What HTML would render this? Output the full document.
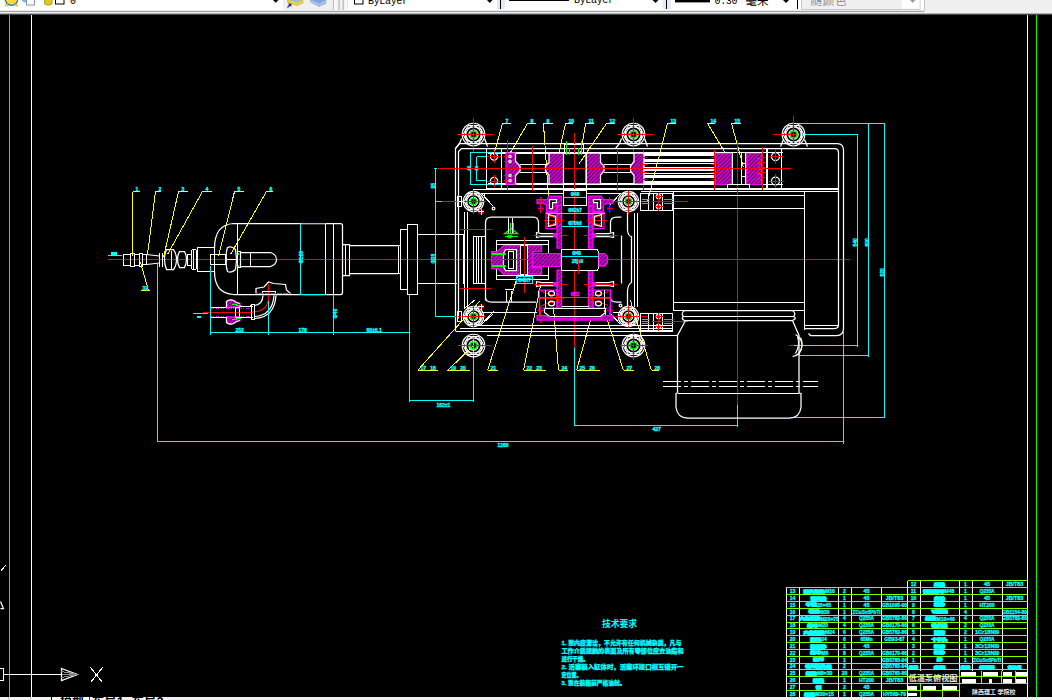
<!DOCTYPE html>
<html lang="zh"><head><meta charset="utf-8"><title>AutoCAD</title>
<style>
html,body{margin:0;padding:0;background:#000;overflow:hidden}
body{width:1052px;height:700px;position:relative;font-family:"Liberation Sans","Noto Sans CJK SC",sans-serif}
#tb{position:absolute;left:0;top:0;width:1052px;height:15px;background:#fff;overflow:hidden}
#bb{position:absolute;left:0;top:697px;width:1052px;height:3px;background:#f0f0f0;overflow:hidden}
svg{position:absolute;left:0;top:0}
#cad line,#cad rect{shape-rendering:crispEdges}
#cad path,#cad circle,#cad ellipse,#cad polyline,#cad polygon{stroke-width:1.25}
#cad g.thin *{stroke-width:1.15}
#cad text{font-weight:bold;font-family:"Liberation Sans","Noto Sans CJK SC",sans-serif}
.hat{fill:url(#hm)}
</style></head><body>
<svg id="cad" width="1052" height="700" viewBox="0 0 1052 700" fill="none" stroke-width="1">
<defs>
<pattern id="hm" width="4" height="4" patternUnits="userSpaceOnUse"><rect width="4" height="4" fill="#000"/><path d="M-1,1 L1,-1 M0,4 L4,0 M3,5 L5,3" stroke="#f0f" style="stroke-width:1.8"/></pattern>
</defs>
<g transform="translate(0.5,0.5)">
<line x1="9" y1="10" x2="9" y2="699" stroke="#0f0"/>
<line x1="31" y1="10" x2="31" y2="699" stroke="#fff"/>
<line x1="1027" y1="10" x2="1027" y2="699" stroke="#fff"/>
<line x1="1036" y1="10" x2="1036" y2="699" stroke="#0f0"/>
<rect x="-1" y="668" width="4" height="12" stroke="#fff" fill="none"/>
<line x1="3" y1="674" x2="61" y2="674" stroke="#fff"/>
<polygon points="61,668 77,674 61,680" stroke="#fff" fill="none"/>
<line x1="61" y1="671" x2="77" y2="674" stroke="#888"/>
<line x1="61" y1="677" x2="77" y2="674" stroke="#888"/>
<line x1="61" y1="674" x2="77" y2="674" stroke="#888"/>
<line x1="90" y1="667" x2="102" y2="682" stroke="#fff"/>
<line x1="102" y1="667" x2="90" y2="682" stroke="#fff"/>
<line x1="0" y1="571" x2="5" y2="565" stroke="#fff"/>
<polyline points="0,601 3,608 0,608" stroke="#fff" fill="none"/>
<line x1="107" y1="259" x2="848" y2="259" stroke="#f00"/>
<rect x="123" y="253.5" width="7" height="11.0" stroke="#fff" fill="none"/>
<rect x="130" y="252.5" width="4" height="13.0" stroke="#fff" fill="none"/>
<rect x="134" y="253.5" width="5" height="11.0" stroke="#fff" fill="none"/>
<rect x="139" y="252.5" width="3" height="13.0" stroke="#fff" fill="none"/>
<rect x="142" y="254" width="4" height="10" stroke="#fff" fill="none"/>
<polyline points="146,254 159,255.5" stroke="#fff" fill="none"/>
<polyline points="146,264 159,262.5" stroke="#fff" fill="none"/>
<line x1="159" y1="252" x2="159" y2="266" stroke="#fff"/>
<line x1="162" y1="252" x2="162" y2="266" stroke="#fff"/>
<path d="M166,249 L173,249 Q176,253 176,259 Q176,265 173,269 L166,269 Q164,264 164,259 Q164,254 166,249 Z" stroke="#fff" fill="none"/>
<line x1="171" y1="250" x2="171" y2="268" stroke="#fff"/>
<path d="M179,251 L184,251 Q186,255 186,259 Q186,263 184,267 L179,267 Q177,263 177,259 Q177,255 179,251 Z" stroke="#fff" fill="none"/>
<rect x="187" y="253.5" width="4" height="11.0" stroke="#fff" fill="none"/>
<rect x="191" y="249" width="5" height="20" stroke="#fff" fill="none" rx="2"/>
<line x1="193" y1="249" x2="193" y2="269" stroke="#fff"/>
<rect x="197" y="247" width="17" height="24" stroke="#fff" fill="none"/>
<line x1="107" y1="255" x2="121" y2="255" stroke="#0ff"/>
<rect x="110.5" y="251.5" width="6" height="3" fill="#0ff"/>
<path d="M214,248 Q214,224 233,223 L340,223 Q342,223 342,225 L342,292 Q342,294 340,294 L233,294 Q214,293 214,271" stroke="#fff" fill="none"/>
<line x1="237" y1="223" x2="237" y2="294" stroke="#fff"/>
<line x1="300" y1="223" x2="300" y2="294" stroke="#0ff"/>
<line x1="325" y1="223" x2="325" y2="294" stroke="#fff"/>
<line x1="300" y1="223" x2="325" y2="223" stroke="#0ff"/>
<line x1="300" y1="294" x2="325" y2="294" stroke="#0ff"/>
<line x1="333" y1="223" x2="333" y2="294" stroke="#fff"/>
<polyline points="342,244 349,244 349,245 398,245" stroke="#fff" fill="none"/>
<polyline points="342,275 349,275 349,273 398,273" stroke="#fff" fill="none"/>
<line x1="345" y1="244" x2="345" y2="275" stroke="#fff"/>
<line x1="349" y1="245" x2="349" y2="273" stroke="#fff"/>
<line x1="398" y1="245" x2="398" y2="273" stroke="#fff"/>
<rect x="400" y="229" width="7" height="60" stroke="#fff" fill="none"/>
<rect x="407" y="224" width="10" height="70" stroke="#fff" fill="none"/>
<line x1="398" y1="245" x2="400" y2="245" stroke="#fff"/>
<line x1="398" y1="273" x2="400" y2="273" stroke="#fff"/>
<line x1="417" y1="234" x2="463" y2="234" stroke="#fff"/>
<line x1="417" y1="283" x2="456" y2="283" stroke="#fff"/>
<rect x="210" y="254" width="15" height="10" stroke="#fff" fill="none"/>
<path d="M227,247 Q231,245 235,249 L236,258 L236,260 L235,269 Q231,273 227,271 Q225,265 226,259 Q225,253 227,247 Z" stroke="#fff" fill="none"/>
<line x1="225" y1="259" x2="237" y2="259" stroke="#fff"/>
<rect x="237" y="251" width="3" height="16" stroke="#fff" fill="none"/>
<path d="M240,252 L270,252 Q276,254 276,259 Q276,264 270,266 L240,266 Z" stroke="#fff" fill="none"/>
<line x1="250" y1="252" x2="250" y2="266" stroke="#fff"/>
<line x1="238" y1="252" x2="238" y2="254" stroke="#0f0"/>
<line x1="238" y1="264" x2="238" y2="266" stroke="#0f0"/>
<line x1="202" y1="311.5" x2="252" y2="311.5" stroke="#f00"/>
<path d="M252,311.5 Q267,311 268,298 L268,284" stroke="#f00" fill="none"/>
<rect x="210" y="306.5" width="25" height="10" stroke="#fff" fill="none"/>
<line x1="210" y1="307.5" x2="252" y2="307.5" stroke="#f0f" stroke-dasharray="1 1.5"/>
<line x1="210" y1="315.5" x2="252" y2="315.5" stroke="#f0f" stroke-dasharray="1 1.5"/>
<path d="M226,301 Q229,298.5 233,300 L236,302 L239.5,303 L239.5,306.5 L226,306.5 Z" stroke="#f0f" fill="url(#hm)"/>
<path d="M226,322 Q229,324.5 233,323 L236,321 L239.5,320 L239.5,316.5 L226,316.5 Z" stroke="#f0f" fill="url(#hm)"/>
<path d="M226,306.5 L226,301 Q229,298.5 233,300 L236,302 L239.5,303 M226,316.5 L226,322 Q229,324.5 233,323 L236,321 L239.5,320" stroke="#fff" fill="none"/>
<line x1="232" y1="303.5" x2="240" y2="305.5" stroke="#0f0"/>
<line x1="232" y1="319.5" x2="240" y2="317.5" stroke="#0f0"/>
<rect x="234.5" y="306.5" width="4" height="10" stroke="#fff" fill="none"/>
<line x1="238.5" y1="306" x2="252" y2="306" stroke="#fff"/>
<line x1="238.5" y1="317" x2="252" y2="317" stroke="#fff"/>
<rect x="250.5" y="304" width="3.5" height="15" stroke="#fff" fill="none" rx="1"/>
<path d="M254,305 Q262,304 262.5,295" stroke="#fff" fill="none"/>
<path d="M254,318 Q274,317 275.5,295" stroke="#fff" fill="none"/>
<path d="M254,316 Q272,315 273.5,295" stroke="#fff" fill="none"/>
<rect x="262" y="290.5" width="13" height="3" stroke="#fff" fill="none" rx="1"/>
<polyline points="255.5,293 255.5,288 263.5,286.5 268,281.5 273,283 285,284 286,289.5 290,293" stroke="#fff" fill="none"/>
<line x1="255.5" y1="293" x2="290" y2="293" stroke="#f0f" stroke-dasharray="1.5 1.5" stroke-width="1.5"/>
<line x1="192" y1="313" x2="207" y2="313" stroke="#0ff"/>
<rect x="196.5" y="315.5" width="4" height="2" fill="#0ff"/>
<line x1="157" y1="262" x2="157" y2="441" stroke="#0ff"/>
<line x1="157" y1="441" x2="843" y2="441" stroke="#0ff"/>
<line x1="843" y1="331" x2="843" y2="443" stroke="#0ff"/>
<line x1="210" y1="265" x2="210" y2="334" stroke="#0ff"/>
<line x1="210" y1="332" x2="409" y2="332" stroke="#0ff"/>
<line x1="268" y1="300" x2="268" y2="334" stroke="#0ff"/>
<line x1="333" y1="294" x2="333" y2="334" stroke="#0ff"/>
<line x1="409" y1="294" x2="409" y2="401" stroke="#0ff"/>
<line x1="409" y1="400" x2="473" y2="400" stroke="#0ff"/>
<line x1="473" y1="338" x2="473" y2="401" stroke="#0ff"/>
<line x1="435" y1="168" x2="435" y2="316" stroke="#0ff"/>
<line x1="433" y1="168" x2="437" y2="168" stroke="#0ff"/>
<line x1="434" y1="201" x2="449" y2="201" stroke="#0ff"/>
<line x1="435" y1="316" x2="457" y2="316" stroke="#0ff"/>
<text x="235" y="331" fill="#0ff" font-size="5" text-anchor="start" stroke="#0ff" stroke-width="0.35">252</text>
<text x="298" y="331" fill="#0ff" font-size="5" text-anchor="start" stroke="#0ff" stroke-width="0.35">178</text>
<text x="366" y="331" fill="#0ff" font-size="5" text-anchor="start" stroke="#0ff" stroke-width="0.35">60±0.1</text>
<text x="436" y="406" fill="#0ff" font-size="5" text-anchor="start" stroke="#0ff" stroke-width="0.35">162±1</text>
<text x="497" y="446" fill="#0ff" font-size="5" text-anchor="start" stroke="#0ff" stroke-width="0.35">1260</text>
<text x="652" y="430" fill="#0ff" font-size="5" text-anchor="start" stroke="#0ff" stroke-width="0.35">427</text>
<text x="434" y="188" fill="#0ff" font-size="5" text-anchor="start" transform="rotate(-90 434 188)" stroke="#0ff" stroke-width="0.35">95</text>
<text x="434" y="263" fill="#0ff" font-size="5" text-anchor="start" transform="rotate(-90 434 263)" stroke="#0ff" stroke-width="0.35">Φ28</text>
<text x="302" y="263" fill="#0ff" font-size="5" text-anchor="start" transform="rotate(-90 302 263)" stroke="#0ff" stroke-width="0.35">Φ120</text>
<text x="336" y="318" fill="#0ff" font-size="5" text-anchor="start" transform="rotate(-90 336 318)" stroke="#0ff" stroke-width="0.35">Φ48</text>
<line x1="574" y1="347" x2="574" y2="425" stroke="#0ff"/>
<line x1="574" y1="425" x2="737" y2="425" stroke="#0ff"/>
<line x1="737" y1="404" x2="737" y2="426" stroke="#0ff"/>
<line x1="796" y1="123" x2="884" y2="123" stroke="#0ff"/>
<line x1="801" y1="134" x2="857" y2="134" stroke="#0ff"/>
<line x1="857" y1="134" x2="857" y2="346" stroke="#0ff"/>
<line x1="868" y1="123" x2="868" y2="356" stroke="#0ff"/>
<line x1="884" y1="123" x2="884" y2="417" stroke="#0ff"/>
<line x1="792" y1="345" x2="857" y2="345" stroke="#0ff"/>
<line x1="798" y1="355" x2="868" y2="355" stroke="#0ff"/>
<line x1="790" y1="417" x2="884" y2="417" stroke="#0ff"/>
<text x="856" y="246" fill="#0ff" font-size="5" text-anchor="start" transform="rotate(-90 856 246)" stroke="#0ff" stroke-width="0.35">540</text>
<text x="868" y="246" fill="#0ff" font-size="5" text-anchor="start" transform="rotate(-90 868 246)" stroke="#0ff" stroke-width="0.35">600</text>
<text x="883" y="276" fill="#0ff" font-size="5" text-anchor="start" transform="rotate(-90 883 276)" stroke="#0ff" stroke-width="0.35">820</text>
<line x1="132" y1="191" x2="139" y2="191" stroke="#ff0"/>
<line x1="132" y1="191" x2="132" y2="255" stroke="#ff0"/>
<text x="135" y="190" fill="#0ff" font-size="5" text-anchor="start" stroke="#0ff" stroke-width="0.35">1</text>
<line x1="155" y1="191" x2="160" y2="191" stroke="#ff0"/>
<line x1="155" y1="191" x2="147" y2="254" stroke="#ff0"/>
<text x="158" y="190" fill="#0ff" font-size="5" text-anchor="start" stroke="#0ff" stroke-width="0.35">2</text>
<line x1="178" y1="191" x2="187" y2="191" stroke="#ff0"/>
<line x1="178" y1="191" x2="163" y2="257" stroke="#ff0"/>
<text x="181" y="190" fill="#0ff" font-size="5" text-anchor="start" stroke="#0ff" stroke-width="0.35">3</text>
<line x1="202" y1="191" x2="211" y2="191" stroke="#ff0"/>
<line x1="202" y1="191" x2="167" y2="254" stroke="#ff0"/>
<text x="205" y="190" fill="#0ff" font-size="5" text-anchor="start" stroke="#0ff" stroke-width="0.35">4</text>
<line x1="234" y1="191" x2="243" y2="191" stroke="#ff0"/>
<line x1="234" y1="191" x2="218" y2="256" stroke="#ff0"/>
<text x="237" y="190" fill="#0ff" font-size="5" text-anchor="start" stroke="#0ff" stroke-width="0.35">5</text>
<line x1="266" y1="191" x2="272" y2="191" stroke="#ff0"/>
<line x1="266" y1="191" x2="230" y2="254" stroke="#ff0"/>
<text x="269" y="190" fill="#0ff" font-size="5" text-anchor="start" stroke="#0ff" stroke-width="0.35">6</text>
<line x1="140" y1="262" x2="148" y2="290" stroke="#ff0"/>
<line x1="140" y1="290" x2="149" y2="290" stroke="#ff0"/>
<text x="142" y="289" fill="#0ff" font-size="5" text-anchor="start" stroke="#0ff" stroke-width="0.35">32</text>
<line x1="502" y1="123" x2="510" y2="123" stroke="#ff0"/>
<line x1="502" y1="123" x2="493" y2="155" stroke="#ff0"/>
<text x="505" y="122" fill="#0ff" font-size="5" text-anchor="start" stroke="#0ff" stroke-width="0.35">7</text>
<line x1="527" y1="123" x2="535" y2="123" stroke="#ff0"/>
<line x1="527" y1="123" x2="510" y2="152" stroke="#ff0"/>
<text x="530" y="122" fill="#0ff" font-size="5" text-anchor="start" stroke="#0ff" stroke-width="0.35">8</text>
<line x1="543" y1="123" x2="552" y2="123" stroke="#ff0"/>
<line x1="543" y1="123" x2="548" y2="196" stroke="#ff0"/>
<text x="546" y="122" fill="#0ff" font-size="5" text-anchor="start" stroke="#0ff" stroke-width="0.35">9</text>
<line x1="543" y1="123" x2="544" y2="140" stroke="#ff0"/>
<line x1="565" y1="123" x2="572" y2="123" stroke="#ff0"/>
<line x1="565" y1="123" x2="557" y2="159" stroke="#ff0"/>
<text x="568" y="122" fill="#0ff" font-size="5" text-anchor="start" stroke="#0ff" stroke-width="0.35">10</text>
<line x1="585" y1="123" x2="593" y2="123" stroke="#ff0"/>
<line x1="585" y1="123" x2="580" y2="154" stroke="#ff0"/>
<text x="588" y="122" fill="#0ff" font-size="5" text-anchor="start" stroke="#0ff" stroke-width="0.35">11</text>
<line x1="606" y1="123" x2="614" y2="123" stroke="#ff0"/>
<line x1="606" y1="123" x2="578" y2="164" stroke="#ff0"/>
<text x="609" y="122" fill="#0ff" font-size="5" text-anchor="start" stroke="#0ff" stroke-width="0.35">12</text>
<line x1="667" y1="123" x2="675" y2="123" stroke="#ff0"/>
<line x1="667" y1="123" x2="647" y2="201" stroke="#ff0"/>
<text x="670" y="122" fill="#0ff" font-size="5" text-anchor="start" stroke="#0ff" stroke-width="0.35">13</text>
<line x1="707" y1="123" x2="714" y2="123" stroke="#ff0"/>
<line x1="707" y1="123" x2="727" y2="156" stroke="#ff0"/>
<text x="710" y="122" fill="#0ff" font-size="5" text-anchor="start" stroke="#0ff" stroke-width="0.35">14</text>
<line x1="731" y1="123" x2="740" y2="123" stroke="#ff0"/>
<line x1="731" y1="123" x2="743" y2="167" stroke="#ff0"/>
<text x="734" y="122" fill="#0ff" font-size="5" text-anchor="start" stroke="#0ff" stroke-width="0.35">15</text>
<line x1="417" y1="370" x2="437" y2="370" stroke="#ff0"/>
<line x1="417" y1="370" x2="479" y2="301" stroke="#ff0"/>
<text x="420" y="369" fill="#0ff" font-size="5" text-anchor="start" stroke="#0ff" stroke-width="0.35">17&#160;&#160;&#160;18</text>
<line x1="447" y1="370" x2="469" y2="370" stroke="#ff0"/>
<line x1="447" y1="370" x2="473" y2="345" stroke="#ff0"/>
<text x="450" y="369" fill="#0ff" font-size="5" text-anchor="start" stroke="#0ff" stroke-width="0.35">19&#160;&#160;&#160;20</text>
<line x1="487" y1="370" x2="497" y2="370" stroke="#ff0"/>
<line x1="487" y1="370" x2="519" y2="270" stroke="#ff0"/>
<text x="490" y="369" fill="#0ff" font-size="5" text-anchor="start" stroke="#0ff" stroke-width="0.35">21</text>
<line x1="523" y1="370" x2="545" y2="370" stroke="#ff0"/>
<line x1="523" y1="370" x2="540" y2="285" stroke="#ff0"/>
<text x="526" y="369" fill="#0ff" font-size="5" text-anchor="start" stroke="#0ff" stroke-width="0.35">22&#160;&#160;&#160;23</text>
<line x1="558" y1="370" x2="567" y2="370" stroke="#ff0"/>
<line x1="558" y1="370" x2="553" y2="307" stroke="#ff0"/>
<text x="561" y="369" fill="#0ff" font-size="5" text-anchor="start" stroke="#0ff" stroke-width="0.35">24</text>
<line x1="576" y1="370" x2="599" y2="370" stroke="#ff0"/>
<line x1="576" y1="370" x2="590" y2="320" stroke="#ff0"/>
<text x="579" y="369" fill="#0ff" font-size="5" text-anchor="start" stroke="#0ff" stroke-width="0.35">25&#160;&#160;&#160;26</text>
<line x1="623" y1="370" x2="633" y2="370" stroke="#ff0"/>
<line x1="623" y1="370" x2="604" y2="310" stroke="#ff0"/>
<text x="626" y="369" fill="#0ff" font-size="5" text-anchor="start" stroke="#0ff" stroke-width="0.35">27</text>
<line x1="651" y1="370" x2="658" y2="370" stroke="#ff0"/>
<line x1="651" y1="370" x2="630" y2="300" stroke="#ff0"/>
<text x="654" y="369" fill="#0ff" font-size="5" text-anchor="start" stroke="#0ff" stroke-width="0.35">28</text>
<g class="thin">
<circle cx="473" cy="134" r="11.3" stroke="#fff" fill="none"/>
<polygon points="483.4,134.0 478.2,143.0 467.8,143.0 462.6,134.0 467.8,125.0 478.2,125.0" stroke="#fff" fill="none"/>
<polygon points="481.1,138.7 473.0,143.4 464.9,138.7 464.9,129.3 473.0,124.6 481.1,129.3" stroke="#fff" fill="none"/>
<circle cx="473" cy="134" r="7.6" stroke="#fff" fill="none"/>
</g>
<circle cx="473" cy="134" r="4.6" stroke="#fff" fill="none"/>
<circle cx="473" cy="134" r="3.4" stroke="#0f0" fill="none"/>
<line x1="456" y1="134" x2="493" y2="134" stroke="#f00"/>
<line x1="473" y1="117" x2="473" y2="151" stroke="#f00"/>
<polyline points="461,138 459,143 455,148" stroke="#fff" fill="none"/>
<polyline points="484,138 487,146" stroke="#fff" fill="none"/>
<g class="thin">
<circle cx="633" cy="134" r="11.3" stroke="#fff" fill="none"/>
<polygon points="643.4,134.0 638.2,143.0 627.8,143.0 622.6,134.0 627.8,125.0 638.2,125.0" stroke="#fff" fill="none"/>
<polygon points="641.1,138.7 633.0,143.4 624.9,138.7 624.9,129.3 633.0,124.6 641.1,129.3" stroke="#fff" fill="none"/>
<circle cx="633" cy="134" r="7.6" stroke="#fff" fill="none"/>
</g>
<circle cx="633" cy="134" r="4.6" stroke="#fff" fill="none"/>
<circle cx="633" cy="134" r="3.4" stroke="#0f0" fill="none"/>
<line x1="616" y1="134" x2="653" y2="134" stroke="#f00"/>
<line x1="633" y1="117" x2="633" y2="151" stroke="#f00"/>
<polyline points="621,138 619,143 615,148" stroke="#fff" fill="none"/>
<polyline points="644,138 647,146" stroke="#fff" fill="none"/>
<g class="thin">
<circle cx="793" cy="134" r="11.3" stroke="#fff" fill="none"/>
<polygon points="803.4,134.0 798.2,143.0 787.8,143.0 782.6,134.0 787.8,125.0 798.2,125.0" stroke="#fff" fill="none"/>
<polygon points="801.1,138.7 793.0,143.4 784.9,138.7 784.9,129.3 793.0,124.6 801.1,129.3" stroke="#fff" fill="none"/>
<circle cx="793" cy="134" r="7.6" stroke="#fff" fill="none"/>
</g>
<circle cx="793" cy="134" r="4.6" stroke="#fff" fill="none"/>
<circle cx="793" cy="134" r="3.4" stroke="#0f0" fill="none"/>
<line x1="772" y1="134" x2="795" y2="134" stroke="#f00"/>
<line x1="793" y1="115" x2="793" y2="147" stroke="#f00"/>
<polyline points="783,139 780,146" stroke="#fff" fill="none"/>
<polyline points="804,139 807,146" stroke="#fff" fill="none"/>
<path d="M455,331 L455,148 L459,143 L837,143 Q843,143 843,150 L843,328 Q843,335 836,335 L810,335 L808,333" stroke="#fff" fill="none"/>
<path d="M458,318 L458,151 L461,148 L834,148 Q838,148 838,152 L838,324 Q838,328 834,328 L804,328" stroke="#fff" fill="none"/>
<line x1="487" y1="152" x2="782" y2="152" stroke="#fff"/>
<line x1="487" y1="153" x2="714" y2="153" stroke="#fff"/>
<line x1="487" y1="183" x2="714" y2="183" stroke="#fff"/>
<line x1="487" y1="184" x2="782" y2="184" stroke="#fff"/>
<line x1="519" y1="164" x2="545" y2="164" stroke="#fff"/>
<line x1="603" y1="164" x2="633" y2="164" stroke="#fff"/>
<line x1="519" y1="172" x2="545" y2="172" stroke="#fff"/>
<line x1="603" y1="172" x2="633" y2="172" stroke="#fff"/>
<rect x="643.5" y="153.5" width="70" height="2" fill="#fff"/>
<rect x="643.5" y="158.5" width="70" height="3" fill="#fff"/>
<rect x="643.5" y="162.5" width="70" height="1" fill="#fff"/>
<rect x="643.5" y="166.5" width="70" height="1" fill="#fff"/>
<rect x="643.5" y="168.5" width="70" height="2" fill="#fff"/>
<rect x="643.5" y="172.5" width="70" height="1" fill="#fff"/>
<rect x="643.5" y="174.5" width="70" height="3" fill="#fff"/>
<rect x="643.5" y="180.5" width="70" height="2" fill="#fff"/>
<line x1="436" y1="168" x2="790" y2="168" stroke="#f00"/>
<line x1="486" y1="188" x2="838" y2="188" stroke="#fff"/>
<line x1="472" y1="189" x2="838" y2="189" stroke="#fff"/>
<line x1="481" y1="193" x2="562" y2="193" stroke="#fff"/>
<line x1="586" y1="193" x2="620" y2="193" stroke="#fff"/>
<line x1="640" y1="191" x2="838" y2="191" stroke="#fff"/>
<rect x="470" y="152" width="31" height="32" stroke="#0ff" fill="none"/>
<line x1="476" y1="156" x2="486" y2="156" stroke="#0ff"/>
<line x1="476" y1="180" x2="486" y2="180" stroke="#0ff"/>
<line x1="476" y1="156" x2="476" y2="180" stroke="#0ff"/>
<text x="469" y="170" fill="#0ff" font-size="4" text-anchor="start" transform="rotate(-90 469 170)" stroke="#0ff" stroke-width="0.35">44</text>
<text x="477" y="170" fill="#0ff" font-size="4" text-anchor="start" transform="rotate(-90 477 170)" stroke="#0ff" stroke-width="0.35">24</text>
<line x1="486" y1="148" x2="486" y2="188" stroke="#fff"/>
<line x1="501" y1="148" x2="501" y2="188" stroke="#fff"/>
<circle cx="493.5" cy="156" r="3.6" stroke="#fff" fill="none"/>
<line x1="486" y1="156" x2="500" y2="156" stroke="#f00"/>
<line x1="493.5" y1="150" x2="493.5" y2="162" stroke="#f00"/>
<circle cx="493.5" cy="180.5" r="3.6" stroke="#fff" fill="none"/>
<line x1="486" y1="180.5" x2="500" y2="180.5" stroke="#f00"/>
<line x1="493.5" y1="174.5" x2="493.5" y2="186.5" stroke="#f00"/>
<line x1="506.5" y1="139" x2="506.5" y2="190" stroke="#f00"/>
<line x1="531.5" y1="145" x2="531.5" y2="190" stroke="#f00"/>
<line x1="616.5" y1="148" x2="616.5" y2="190" stroke="#f00"/>
<line x1="642.5" y1="148" x2="642.5" y2="189" stroke="#f00"/>
<line x1="713.5" y1="148" x2="713.5" y2="189" stroke="#f00"/>
<line x1="761.5" y1="146" x2="761.5" y2="189" stroke="#f00"/>
<line x1="574" y1="132" x2="574" y2="347" stroke="#f00"/>
<line x1="737" y1="140" x2="737" y2="404" stroke="#f00"/>
<polygon points="505.5,152.5 515,152.5 515,161 519.5,165.5 519.5,170.5 515,175 515,183.5 505.5,183.5" stroke="#f0f" fill="url(#hm)"/>
<polyline points="515,153 515,161 519.5,165.5 519.5,170.5 515,175 515,183" stroke="#fff" fill="none"/>
<line x1="503" y1="156" x2="511" y2="156" stroke="#f00"/>
<circle cx="509.5" cy="156" r="1.2" stroke="#fff" fill="none"/>
<line x1="503" y1="161" x2="511" y2="161" stroke="#f00"/>
<circle cx="509.5" cy="161" r="1.2" stroke="#fff" fill="none"/>
<line x1="503" y1="175" x2="511" y2="175" stroke="#f00"/>
<circle cx="509.5" cy="175" r="1.2" stroke="#fff" fill="none"/>
<line x1="503" y1="180" x2="511" y2="180" stroke="#f00"/>
<circle cx="509.5" cy="180" r="1.2" stroke="#fff" fill="none"/>
<polygon points="548.5,152.5 563,152.5 563,183.5 548.5,183.5 548.5,174.5 545,170.5 545,165.5 548.5,162" stroke="#fff" fill="url(#hm)"/>
<polygon points="585.5,152.5 600,152.5 600,162 603.5,165.5 603.5,170.5 600,174.5 600,183.5 585.5,183.5" stroke="#fff" fill="url(#hm)"/>
<polygon points="643.5,152.5 633.5,152.5 633.5,161 630,165.5 630,170.5 633.5,175 633.5,183.5 643.5,183.5" stroke="#fff" fill="url(#hm)"/>
<line x1="638" y1="157" x2="646" y2="157" stroke="#f00"/>
<line x1="638" y1="164" x2="646" y2="164" stroke="#f00"/>
<line x1="638" y1="172" x2="646" y2="172" stroke="#f00"/>
<line x1="638" y1="179" x2="646" y2="179" stroke="#f00"/>
<rect x="714.5" y="152.5" width="16" height="31" stroke="#f0f" fill="url(#hm)"/>
<line x1="710" y1="157" x2="718" y2="157" stroke="#f00"/>
<line x1="710" y1="164" x2="718" y2="164" stroke="#f00"/>
<line x1="710" y1="172" x2="718" y2="172" stroke="#f00"/>
<line x1="710" y1="179" x2="718" y2="179" stroke="#f00"/>
<rect x="746" y="152.5" width="15" height="31" stroke="#f0f" fill="url(#hm)"/>
<line x1="757" y1="157" x2="765" y2="157" stroke="#f00"/>
<line x1="757" y1="158" x2="762" y2="159" stroke="#f0f"/>
<line x1="757" y1="162" x2="765" y2="162" stroke="#f00"/>
<line x1="757" y1="163" x2="762" y2="164" stroke="#f0f"/>
<line x1="757" y1="167" x2="765" y2="167" stroke="#f00"/>
<line x1="757" y1="168" x2="762" y2="169" stroke="#f0f"/>
<line x1="757" y1="172" x2="765" y2="172" stroke="#f00"/>
<line x1="757" y1="173" x2="762" y2="174" stroke="#f0f"/>
<line x1="757" y1="177" x2="765" y2="177" stroke="#f00"/>
<line x1="757" y1="178" x2="762" y2="179" stroke="#f0f"/>
<line x1="732" y1="152.5" x2="732" y2="184" stroke="#fff"/>
<line x1="741" y1="152.5" x2="741" y2="184" stroke="#fff"/>
<line x1="744.5" y1="152.5" x2="744.5" y2="184" stroke="#fff"/>
<rect x="727" y="184" width="22" height="4" stroke="#fff" fill="none"/>
<line x1="766" y1="148" x2="766" y2="188" stroke="#fff"/>
<line x1="741" y1="163" x2="744" y2="163" stroke="#fff"/>
<line x1="741" y1="176" x2="744" y2="176" stroke="#fff"/>
<rect x="767" y="148" width="14" height="40" stroke="#fff" fill="none"/>
<circle cx="775" cy="156" r="4" stroke="#fff" fill="none"/>
<line x1="768" y1="156" x2="782" y2="156" stroke="#f00"/>
<line x1="775" y1="149" x2="775" y2="163" stroke="#f00"/>
<circle cx="775" cy="180.5" r="4" stroke="#fff" fill="none"/>
<line x1="768" y1="180.5" x2="782" y2="180.5" stroke="#f00"/>
<line x1="775" y1="173.5" x2="775" y2="187.5" stroke="#f00"/>
<line x1="436" y1="168" x2="790" y2="168" stroke="#f00"/>
<line x1="563" y1="152.5" x2="563" y2="195" stroke="#fff"/>
<line x1="585.5" y1="152.5" x2="585.5" y2="195" stroke="#fff"/>
<rect x="564" y="143.5" width="19" height="9" stroke="#fff" fill="none"/>
<line x1="566" y1="140" x2="566" y2="154" stroke="#0f0"/>
<line x1="581" y1="140" x2="581" y2="154" stroke="#0f0"/>
<line x1="569" y1="147" x2="569" y2="154" stroke="#0f0"/>
<line x1="578" y1="147" x2="578" y2="154" stroke="#0f0"/>
<line x1="563" y1="189" x2="586" y2="189" stroke="#fff"/>
<g class="thin">
<circle cx="473" cy="201" r="10.2" stroke="#fff" fill="none"/>
<polygon points="482.4,201.0 477.7,209.1 468.3,209.1 463.6,201.0 468.3,192.9 477.7,192.9" stroke="#fff" fill="none"/>
<polygon points="480.3,205.2 473.0,209.5 465.7,205.2 465.7,196.8 473.0,192.5 480.3,196.8" stroke="#fff" fill="none"/>
<circle cx="473" cy="201" r="6.8" stroke="#fff" fill="none"/>
</g>
<circle cx="473" cy="201" r="4.1" stroke="#fff" fill="none"/>
<circle cx="473" cy="201" r="3.1" stroke="#0f0" fill="none"/>
<line x1="441" y1="201" x2="485" y2="201" stroke="#f00"/>
<line x1="473" y1="189" x2="473" y2="213" stroke="#f00"/>
<g class="thin">
<circle cx="628" cy="201" r="10.2" stroke="#fff" fill="none"/>
<polygon points="637.4,201.0 632.7,209.1 623.3,209.1 618.6,201.0 623.3,192.9 632.7,192.9" stroke="#fff" fill="none"/>
<polygon points="635.3,205.2 628.0,209.5 620.7,205.2 620.7,196.8 628.0,192.5 635.3,196.8" stroke="#fff" fill="none"/>
<circle cx="628" cy="201" r="6.8" stroke="#fff" fill="none"/>
</g>
<circle cx="628" cy="201" r="4.1" stroke="#fff" fill="none"/>
<circle cx="628" cy="201" r="3.1" stroke="#0f0" fill="none"/>
<line x1="614" y1="201" x2="646" y2="201" stroke="#f00"/>
<line x1="628" y1="189" x2="628" y2="213" stroke="#f00"/>
<rect x="457" y="196" width="4" height="10" stroke="#fff" fill="none"/>
<g class="thin">
<circle cx="473" cy="316" r="10.2" stroke="#fff" fill="none"/>
<polygon points="482.4,316.0 477.7,324.1 468.3,324.1 463.6,316.0 468.3,307.9 477.7,307.9" stroke="#fff" fill="none"/>
<polygon points="480.3,320.2 473.0,324.5 465.7,320.2 465.7,311.8 473.0,307.5 480.3,311.8" stroke="#fff" fill="none"/>
<circle cx="473" cy="316" r="6.8" stroke="#fff" fill="none"/>
</g>
<circle cx="473" cy="316" r="4.1" stroke="#fff" fill="none"/>
<circle cx="473" cy="316" r="3.1" stroke="#0f0" fill="none"/>
<line x1="454" y1="316" x2="485" y2="316" stroke="#f00"/>
<line x1="473" y1="304" x2="473" y2="328" stroke="#f00"/>
<g class="thin">
<circle cx="628" cy="316" r="10.2" stroke="#fff" fill="none"/>
<polygon points="637.4,316.0 632.7,324.1 623.3,324.1 618.6,316.0 623.3,307.9 632.7,307.9" stroke="#fff" fill="none"/>
<polygon points="635.3,320.2 628.0,324.5 620.7,320.2 620.7,311.8 628.0,307.5 635.3,311.8" stroke="#fff" fill="none"/>
<circle cx="628" cy="316" r="6.8" stroke="#fff" fill="none"/>
</g>
<circle cx="628" cy="316" r="4.1" stroke="#fff" fill="none"/>
<circle cx="628" cy="316" r="3.1" stroke="#0f0" fill="none"/>
<line x1="614" y1="316" x2="646" y2="316" stroke="#f00"/>
<line x1="628" y1="304" x2="628" y2="328" stroke="#f00"/>
<rect x="457" y="311" width="4" height="10" stroke="#fff" fill="none"/>
<g class="thin">
<circle cx="473" cy="345" r="11.3" stroke="#fff" fill="none"/>
<polygon points="483.4,345.0 478.2,354.0 467.8,354.0 462.6,345.0 467.8,336.0 478.2,336.0" stroke="#fff" fill="none"/>
<polygon points="481.1,349.7 473.0,354.4 464.9,349.7 464.9,340.3 473.0,335.6 481.1,340.3" stroke="#fff" fill="none"/>
<circle cx="473" cy="345" r="7.6" stroke="#fff" fill="none"/>
</g>
<circle cx="473" cy="345" r="4.6" stroke="#fff" fill="none"/>
<circle cx="473" cy="345" r="3.4" stroke="#0f0" fill="none"/>
<line x1="457" y1="345" x2="490" y2="345" stroke="#f00"/>
<line x1="473" y1="345" x2="473" y2="345" stroke="#f00"/>
<g class="thin">
<circle cx="633" cy="345" r="11.3" stroke="#fff" fill="none"/>
<polygon points="643.4,345.0 638.2,354.0 627.8,354.0 622.6,345.0 627.8,336.0 638.2,336.0" stroke="#fff" fill="none"/>
<polygon points="641.1,349.7 633.0,354.4 624.9,349.7 624.9,340.3 633.0,335.6 641.1,340.3" stroke="#fff" fill="none"/>
<circle cx="633" cy="345" r="7.6" stroke="#fff" fill="none"/>
</g>
<circle cx="633" cy="345" r="4.6" stroke="#fff" fill="none"/>
<circle cx="633" cy="345" r="3.4" stroke="#0f0" fill="none"/>
<line x1="619" y1="345" x2="647" y2="345" stroke="#f00"/>
<line x1="633" y1="331" x2="633" y2="359" stroke="#f00"/>
<path d="M795,334 Q803,338 801,348 Q799,355 792,356" stroke="#fff" fill="none"/>
<path d="M797,336 Q800,344 795,353" stroke="#fff" fill="none"/>
<path d="M800,337 Q804,345 798,354" stroke="#fff" fill="none"/>
<line x1="788" y1="345" x2="793" y2="345" stroke="#f00"/>
<circle cx="480.5" cy="211" r="2" stroke="#f00" fill="none"/>
<line x1="477.5" y1="211" x2="483.5" y2="211" stroke="#fff"/>
<line x1="480.5" y1="208" x2="480.5" y2="214" stroke="#fff"/>
<circle cx="480.5" cy="306" r="2" stroke="#f00" fill="none"/>
<line x1="477.5" y1="306" x2="483.5" y2="306" stroke="#fff"/>
<line x1="480.5" y1="303" x2="480.5" y2="309" stroke="#fff"/>
<circle cx="493" cy="208" r="1.4" stroke="#fff" fill="none"/>
<circle cx="620" cy="305" r="1.4" stroke="#fff" fill="none"/>
<line x1="481" y1="193" x2="493" y2="206" stroke="#fff"/>
<line x1="484" y1="193" x2="484" y2="197" stroke="#fff"/>
<line x1="481" y1="324" x2="493" y2="311" stroke="#fff"/>
<line x1="620" y1="193" x2="608" y2="206" stroke="#fff"/>
<line x1="620" y1="324" x2="610" y2="313" stroke="#fff"/>
<line x1="464" y1="211" x2="464" y2="308" stroke="#fff"/>
<line x1="467" y1="211" x2="467" y2="308" stroke="#fff"/>
<line x1="456" y1="201" x2="463" y2="201" stroke="#fff"/>
<rect x="473" y="236" width="12" height="47" stroke="#fff" fill="none"/>
<line x1="476" y1="236" x2="476" y2="283" stroke="#fff"/>
<line x1="478" y1="236" x2="478" y2="283" stroke="#fff"/>
<line x1="481" y1="236" x2="481" y2="283" stroke="#fff"/>
<line x1="458.5" y1="229" x2="490.5" y2="229" stroke="#f00"/>
<line x1="458.5" y1="288" x2="490.5" y2="288" stroke="#f00"/>
<line x1="463" y1="234" x2="463" y2="283" stroke="#fff"/>
<path d="M485,300 L485,222 Q485,216.5 491,216.5 L533,216.5 Q538,217 538,222 L538,232" stroke="#fff" fill="none"/>
<path d="M485,297 Q485,301.5 491,301.5 L536,301.5" stroke="#fff" fill="none"/>
<path d="M538,297 L538,290" stroke="#fff" fill="none"/>
<path d="M610,232 L610,222 Q610,216.5 616,216.5 L621,216.5" stroke="#fff" fill="none"/>
<path d="M621,235 L621,283" stroke="#fff" fill="none"/>
<path d="M610,290 L610,297 Q610,301.5 616,301.5 L621,301.5" stroke="#fff" fill="none"/>
<path d="M627,212 L627,230 Q628,236 631,236 L631,282 Q628,283 627,290 L627,306" stroke="#fff" fill="none"/>
<line x1="634" y1="212" x2="634" y2="306" stroke="#fff"/>
<line x1="636.5" y1="212" x2="636.5" y2="306" stroke="#fff"/>
<line x1="510" y1="222" x2="510" y2="233" stroke="#0f0"/>
<line x1="513" y1="222" x2="513" y2="233" stroke="#0f0"/>
<polygon points="504,233 517,233 511,228" stroke="#0f0" fill="none"/>
<line x1="504" y1="236" x2="517" y2="236" stroke="#0f0"/>
<text x="507" y="237" fill="#0f0" font-size="4" text-anchor="start" stroke="#0f0" stroke-width="0.35">12</text>
<line x1="481" y1="312" x2="536" y2="312" stroke="#fff"/>
<line x1="612" y1="312" x2="620" y2="312" stroke="#fff"/>
<line x1="475" y1="325" x2="672" y2="325" stroke="#fff"/>
<line x1="459" y1="328" x2="672" y2="328" stroke="#fff"/>
<line x1="459" y1="331" x2="672" y2="331" stroke="#fff"/>
<line x1="486" y1="335" x2="677" y2="335" stroke="#fff"/>
<line x1="455" y1="331" x2="459" y2="331" stroke="#fff"/>
<line x1="464" y1="308" x2="475" y2="299" stroke="#fff"/>
<line x1="481" y1="324" x2="493" y2="313" stroke="#fff"/>
<rect x="640" y="192.5" width="32" height="17" stroke="#fff" fill="none"/>
<line x1="648" y1="192.5" x2="648" y2="209.5" stroke="#fff"/>
<line x1="653" y1="192.5" x2="653" y2="209.5" stroke="#fff"/>
<line x1="662" y1="192.5" x2="662" y2="209.5" stroke="#fff"/>
<circle cx="658" cy="196" r="2.2" stroke="#fff" fill="none"/>
<circle cx="658" cy="206" r="2.2" stroke="#fff" fill="none"/>
<line x1="654" y1="196" x2="662" y2="196" stroke="#f00"/>
<line x1="654" y1="206" x2="662" y2="206" stroke="#f00"/>
<line x1="658" y1="192" x2="658" y2="210" stroke="#f00"/>
<line x1="641" y1="199" x2="648" y2="199" stroke="#0f0"/>
<line x1="641" y1="203" x2="648" y2="203" stroke="#0f0"/>
<line x1="641" y1="201" x2="648" y2="201" stroke="#0f0"/>
<line x1="663" y1="199" x2="672" y2="199" stroke="#0f0"/>
<line x1="663" y1="203" x2="672" y2="203" stroke="#0f0"/>
<line x1="651" y1="201" x2="687" y2="201" stroke="#f00"/>
<rect x="640" y="312.5" width="32" height="17" stroke="#fff" fill="none"/>
<line x1="648" y1="312.5" x2="648" y2="329.5" stroke="#fff"/>
<line x1="653" y1="312.5" x2="653" y2="329.5" stroke="#fff"/>
<line x1="662" y1="312.5" x2="662" y2="329.5" stroke="#fff"/>
<circle cx="658" cy="316" r="2.2" stroke="#fff" fill="none"/>
<circle cx="658" cy="326" r="2.2" stroke="#fff" fill="none"/>
<line x1="654" y1="316" x2="662" y2="316" stroke="#f00"/>
<line x1="654" y1="326" x2="662" y2="326" stroke="#f00"/>
<line x1="658" y1="312" x2="658" y2="330" stroke="#f00"/>
<line x1="641" y1="319" x2="648" y2="319" stroke="#0f0"/>
<line x1="641" y1="323" x2="648" y2="323" stroke="#0f0"/>
<line x1="641" y1="321" x2="648" y2="321" stroke="#0f0"/>
<line x1="663" y1="319" x2="672" y2="319" stroke="#0f0"/>
<line x1="663" y1="323" x2="672" y2="323" stroke="#0f0"/>
<line x1="651" y1="321" x2="687" y2="321" stroke="#f00"/>
<line x1="672.5" y1="191" x2="672.5" y2="309.5" stroke="#fff"/>
<line x1="803.5" y1="191" x2="803.5" y2="329" stroke="#fff"/>
<line x1="672.5" y1="194.5" x2="803.5" y2="194.5" stroke="#fff"/>
<line x1="672.5" y1="208" x2="803.5" y2="208" stroke="#fff"/>
<line x1="672.5" y1="302" x2="803.5" y2="302" stroke="#fff"/>
<line x1="672.5" y1="309.5" x2="803.5" y2="309.5" stroke="#fff"/>
<line x1="803.5" y1="325" x2="838" y2="325" stroke="#fff"/>
<path d="M684,310 L792,310 Q796,313 793,316 Q797,318 792,320 L684,320 Q680,318 683,316 Q680,313 684,310 Z" stroke="#fff" fill="none"/>
<line x1="683" y1="316" x2="793" y2="316" stroke="#fff"/>
<polyline points="685,320 677,335 677,392.5" stroke="#fff" fill="none"/>
<polyline points="792,320 798.5,335 798.5,392.5" stroke="#fff" fill="none"/>
<line x1="640" y1="335" x2="677" y2="335" stroke="#fff"/>
<line x1="662" y1="381" x2="817" y2="381" stroke="#fff" stroke-dasharray="18 3 4 3"/>
<line x1="662" y1="386" x2="817" y2="386" stroke="#fff" stroke-dasharray="18 3 4 3"/>
<path d="M677,392.5 L675.5,393 L675.5,407 Q677,417.5 687,417.5 L789,417.5 Q799,417.5 800.5,407 L800.5,393 L798.5,392.5" stroke="#fff" fill="none"/>
<line x1="677" y1="392.5" x2="798.5" y2="392.5" stroke="#fff"/>
<rect x="562.5" y="189.5" width="23" height="15.5" stroke="#fff" fill="none"/>
<line x1="562.5" y1="196.5" x2="585.5" y2="196.5" stroke="#0ff"/>
<text x="574.5" y="195" fill="#0ff" font-size="4.5" text-anchor="middle" stroke="#0ff" stroke-width="0.35">Φ48</text>
<polygon points="612.5,203 612.5,199 602.0,199 601.0,195.5 588.0,195.5 588.0,205 592.5,205 592.5,211 603.0,211 603.0,204 608.0,203" stroke="#f0f" fill="url(#hm)"/>
<polygon points="600.0,199 593.0,199 593.0,202 597.0,202 597.0,208 600.0,208" stroke="#fff" fill="#000"/>
<polygon points="592.5,205 588.0,205 588.0,247.5 592.5,247.5" stroke="#f0f" fill="url(#hm)"/>
<polygon points="592.5,269.5 588.0,269.5 588.0,307.5 592.5,307.5" stroke="#f0f" fill="url(#hm)"/>
<polygon points="603.5,212 592.5,212 592.5,228 603.5,228" stroke="#f0f" fill="none"/>
<line x1="603.0" y1="214" x2="589.0" y2="219" stroke="#f00"/>
<line x1="603.0" y1="226" x2="589.0" y2="221" stroke="#f00"/>
<line x1="602.0" y1="217" x2="593.0" y2="215" stroke="#f00"/>
<line x1="602.0" y1="223" x2="593.0" y2="225" stroke="#f00"/>
<line x1="606.0" y1="219.5" x2="586.0" y2="219.5" stroke="#f00"/>
<polygon points="601.0,214 594.0,216 594.0,224 601.0,226" stroke="#fff" fill="none"/>
<polygon points="610.0,289.5 592.5,289.5 592.5,307.5 610.0,307.5" stroke="#f0f" fill="none"/>
<line x1="608.0" y1="291" x2="589.0" y2="297" stroke="#f00"/>
<line x1="608.0" y1="305" x2="589.0" y2="299" stroke="#f00"/>
<line x1="611.0" y1="298" x2="586.0" y2="298" stroke="#f00"/>
<ellipse cx="598.0" cy="293" rx="3" ry="2.4" stroke="#fff" fill="none"/>
<ellipse cx="598.0" cy="303" rx="3" ry="2.4" stroke="#fff" fill="none"/>
<line x1="604.0" y1="289.5" x2="604.0" y2="307.5" stroke="#fff"/>
<circle cx="609.0" cy="208" r="2" stroke="#00f" style="stroke-width:1.8" fill="none"/>
<line x1="606.0" y1="208" x2="612.0" y2="208" stroke="#f00"/>
<line x1="609.0" y1="196" x2="609.0" y2="212" stroke="#f00"/>
<circle cx="609.0" cy="309.5" r="2" stroke="#00f" style="stroke-width:1.8" fill="none"/>
<line x1="606.0" y1="309.5" x2="612.0" y2="309.5" stroke="#f00"/>
<line x1="609.0" y1="305" x2="609.0" y2="322" stroke="#f00"/>
<polygon points="613.0,232.0 608.0,233.0 593.0,233.0 593.0,236.0 608.0,236.0 613.0,237.0" stroke="#fff" fill="none"/>
<line x1="606.0" y1="234.5" x2="596.0" y2="234.5" stroke="#0f0"/>
<line x1="616.0" y1="234.5" x2="583.0" y2="234.5" stroke="#f00"/>
<rect x="591.5" y="232.0" width="4" height="4" fill="#f0f"/>
<polygon points="613.0,281.0 608.0,282.0 593.0,282.0 593.0,285.0 608.0,285.0 613.0,286.0" stroke="#fff" fill="none"/>
<line x1="606.0" y1="283.5" x2="596.0" y2="283.5" stroke="#0f0"/>
<line x1="616.0" y1="283.5" x2="583.0" y2="283.5" stroke="#f00"/>
<rect x="591.5" y="281.0" width="4" height="4" fill="#f0f"/>
<polygon points="612.5,315 604.0,315 600.0,317.5 574.5,317.5 574.5,319.5 612.5,319.5" stroke="#f0f" fill="url(#hm)"/>
<line x1="610.0" y1="295.5" x2="610.0" y2="314.5" stroke="#f0f"/>
<polyline points="605.0,308 605.0,312 600.0,316" stroke="#fff" fill="none"/>
<polygon points="536.5,203 536.5,199 547.0,199 548.0,195.5 561.0,195.5 561.0,205 556.5,205 556.5,211 546.0,211 546.0,204 541.0,203" stroke="#f0f" fill="url(#hm)"/>
<polygon points="549.0,199 556.0,199 556.0,202 552.0,202 552.0,208 549.0,208" stroke="#fff" fill="#000"/>
<polygon points="556.5,205 561.0,205 561.0,247.5 556.5,247.5" stroke="#f0f" fill="url(#hm)"/>
<polygon points="556.5,269.5 561.0,269.5 561.0,307.5 556.5,307.5" stroke="#f0f" fill="url(#hm)"/>
<polygon points="545.5,212 556.5,212 556.5,228 545.5,228" stroke="#f0f" fill="none"/>
<line x1="546.0" y1="214" x2="560.0" y2="219" stroke="#f00"/>
<line x1="546.0" y1="226" x2="560.0" y2="221" stroke="#f00"/>
<line x1="547.0" y1="217" x2="556.0" y2="215" stroke="#f00"/>
<line x1="547.0" y1="223" x2="556.0" y2="225" stroke="#f00"/>
<line x1="543.0" y1="219.5" x2="563.0" y2="219.5" stroke="#f00"/>
<polygon points="548.0,214 555.0,216 555.0,224 548.0,226" stroke="#fff" fill="none"/>
<polygon points="539.0,289.5 556.5,289.5 556.5,307.5 539.0,307.5" stroke="#f0f" fill="none"/>
<line x1="541.0" y1="291" x2="560.0" y2="297" stroke="#f00"/>
<line x1="541.0" y1="305" x2="560.0" y2="299" stroke="#f00"/>
<line x1="538.0" y1="298" x2="563.0" y2="298" stroke="#f00"/>
<ellipse cx="551.0" cy="293" rx="3" ry="2.4" stroke="#fff" fill="none"/>
<ellipse cx="551.0" cy="303" rx="3" ry="2.4" stroke="#fff" fill="none"/>
<line x1="545.0" y1="289.5" x2="545.0" y2="307.5" stroke="#fff"/>
<circle cx="540.0" cy="208" r="2" stroke="#00f" style="stroke-width:1.8" fill="none"/>
<line x1="537.0" y1="208" x2="543.0" y2="208" stroke="#f00"/>
<line x1="540.0" y1="196" x2="540.0" y2="212" stroke="#f00"/>
<circle cx="540.0" cy="309.5" r="2" stroke="#00f" style="stroke-width:1.8" fill="none"/>
<line x1="537.0" y1="309.5" x2="543.0" y2="309.5" stroke="#f00"/>
<line x1="540.0" y1="305" x2="540.0" y2="322" stroke="#f00"/>
<polygon points="536.0,232.0 541.0,233.0 556.0,233.0 556.0,236.0 541.0,236.0 536.0,237.0" stroke="#fff" fill="none"/>
<line x1="543.0" y1="234.5" x2="553.0" y2="234.5" stroke="#0f0"/>
<line x1="533.0" y1="234.5" x2="566.0" y2="234.5" stroke="#f00"/>
<rect x="552.5" y="232.0" width="4" height="4" fill="#f0f"/>
<polygon points="536.0,281.0 541.0,282.0 556.0,282.0 556.0,285.0 541.0,285.0 536.0,286.0" stroke="#fff" fill="none"/>
<line x1="543.0" y1="283.5" x2="553.0" y2="283.5" stroke="#0f0"/>
<line x1="533.0" y1="283.5" x2="566.0" y2="283.5" stroke="#f00"/>
<rect x="552.5" y="281.0" width="4" height="4" fill="#f0f"/>
<polygon points="536.5,315 545.0,315 549.0,317.5 574.5,317.5 574.5,319.5 536.5,319.5" stroke="#f0f" fill="url(#hm)"/>
<line x1="539.0" y1="295.5" x2="539.0" y2="314.5" stroke="#f0f"/>
<polyline points="544.0,308 544.0,312 549.0,316" stroke="#fff" fill="none"/>
<line x1="539" y1="296.5" x2="609" y2="296.5" stroke="#f0f"/>
<text x="574.5" y="295" fill="#f0f" font-size="4.5" text-anchor="middle" stroke="#f0f" stroke-width="0.35">Φ52</text>
<line x1="544" y1="308" x2="605" y2="308" stroke="#fff"/>
<line x1="561" y1="306" x2="588" y2="306" stroke="#fff"/>
<line x1="549" y1="316" x2="600" y2="316" stroke="#fff"/>
<line x1="545.5" y1="212.5" x2="604" y2="212.5" stroke="#0ff"/>
<line x1="561" y1="225.5" x2="588.5" y2="225.5" stroke="#0ff"/>
<text x="574.5" y="211" fill="#0ff" font-size="4.5" text-anchor="middle" stroke="#0ff" stroke-width="0.35">Φ62k7</text>
<text x="574.5" y="224" fill="#0ff" font-size="4.5" text-anchor="middle" stroke="#0ff" stroke-width="0.35">Φ70k6</text>
<rect x="560.5" y="248.5" width="37" height="21.5" stroke="#fff" fill="#000" rx="2"/>
<polygon points="598.5,253 604,253 607,256 607,262 604,265.5 598.5,265.5" stroke="#f0f" fill="url(#hm)"/>
<line x1="560.5" y1="256" x2="597.5" y2="256" stroke="#0ff"/>
<text x="576" y="254.5" fill="#0ff" font-size="4.5" text-anchor="middle" stroke="#0ff" stroke-width="0.35">Φ48</text>
<text x="577" y="262.5" fill="#0ff" font-size="4.5" text-anchor="middle" stroke="#0ff" stroke-width="0.35">28js9</text>
<line x1="578" y1="258" x2="578" y2="273" stroke="#f00"/>
<rect x="495.5" y="239.5" width="52" height="39" stroke="#fff" fill="none"/>
<line x1="495.5" y1="243.5" x2="547.5" y2="243.5" stroke="#fff"/>
<line x1="495.5" y1="274.5" x2="547.5" y2="274.5" stroke="#fff"/>
<polygon points="491,251 497,251 503,245 541,245 541,251 532,251 532,267 541,267 541,273.5 503,273.5 497,268 491,268" stroke="#f0f" fill="url(#hm)"/>
<polygon points="505,249 516,249 516,270 505,270 503,266 503,253" stroke="#fff" fill="#000"/>
<rect x="508" y="251" width="5" height="17" stroke="#fff" fill="none"/>
<rect x="520" y="245" width="7" height="28.5" stroke="#fff" fill="#000"/>
<line x1="523.5" y1="236" x2="523.5" y2="292" stroke="#f00"/>
<rect x="532" y="253" width="27.5" height="12.5" stroke="#f0f" fill="url(#hm)"/>
<line x1="491" y1="254" x2="505" y2="254" stroke="#0f0"/>
<line x1="491" y1="264.5" x2="505" y2="264.5" stroke="#0f0"/>
<line x1="491" y1="253" x2="505" y2="253" stroke="#0f0"/>
<line x1="491" y1="265.5" x2="505" y2="265.5" stroke="#0f0"/>
<line x1="491" y1="259" x2="560" y2="259" stroke="#f00"/>
<rect x="516" y="275.5" width="16" height="7.5" stroke="#0ff" fill="none"/>
<text x="524" y="281.5" fill="#0ff" font-size="4.5" text-anchor="middle" stroke="#0ff" stroke-width="0.35">Φ48f7</text>
<line x1="508" y1="217" x2="508" y2="232" stroke="#fff"/>
<line x1="512" y1="217" x2="512" y2="232" stroke="#fff"/>
<line x1="506" y1="290" x2="506" y2="301.5" stroke="#fff"/>
<line x1="511" y1="290" x2="511" y2="301.5" stroke="#fff"/>
<line x1="504" y1="289" x2="513" y2="289" stroke="#fff"/>
<text x="792" y="592.55" fill="#0ff" font-size="5" text-anchor="middle" font-weight="bold" stroke="#0ff" stroke-width="0.3">13</text>
<text x="803.2" y="592.25" fill="#0ff" font-size="3.6" text-anchor="start" font-weight="bold" stroke="#0ff" stroke-width="1.3" stroke-linejoin="round" textLength="20.8" lengthAdjust="spacingAndGlyphs">双头螺柱</text>
<text x="824.5" y="592.65" fill="#0ff" font-size="5" text-anchor="start" font-weight="bold" stroke="#0ff" stroke-width="0.3">M16</text>
<text x="844" y="592.55" fill="#0ff" font-size="5" text-anchor="middle" font-weight="bold" stroke="#0ff" stroke-width="0.3">2</text>
<text x="866" y="592.55" fill="#0ff" font-size="5" text-anchor="middle" font-weight="bold" stroke="#0ff" stroke-width="0.3" textLength="6.0" lengthAdjust="spacingAndGlyphs">45</text>
<text x="792" y="599.4" fill="#0ff" font-size="5" text-anchor="middle" font-weight="bold" stroke="#0ff" stroke-width="0.3">14</text>
<text x="810.2" y="599.1" fill="#0ff" font-size="3.6" text-anchor="start" font-weight="bold" stroke="#0ff" stroke-width="1.3" stroke-linejoin="round" textLength="15.6" lengthAdjust="spacingAndGlyphs">法兰盘</text>
<text x="844" y="599.4" fill="#0ff" font-size="5" text-anchor="middle" font-weight="bold" stroke="#0ff" stroke-width="0.3">1</text>
<text x="866" y="599.4" fill="#0ff" font-size="5" text-anchor="middle" font-weight="bold" stroke="#0ff" stroke-width="0.3" textLength="6.0" lengthAdjust="spacingAndGlyphs">45</text>
<text x="894" y="599.4" fill="#0ff" font-size="5" text-anchor="middle" font-weight="bold" stroke="#0ff" stroke-width="0.3" textLength="17.4" lengthAdjust="spacingAndGlyphs">JB/T83</text>
<text x="792" y="606.25" fill="#0ff" font-size="5" text-anchor="middle" font-weight="bold" stroke="#0ff" stroke-width="0.3">15</text>
<text x="805.5" y="605.95" fill="#0ff" font-size="3.6" text-anchor="start" font-weight="bold" stroke="#0ff" stroke-width="1.3" stroke-linejoin="round" textLength="10.4" lengthAdjust="spacingAndGlyphs">平键</text>
<text x="816.4" y="606.35" fill="#0ff" font-size="5" text-anchor="start" font-weight="bold" stroke="#0ff" stroke-width="0.3">20×45</text>
<text x="844" y="606.25" fill="#0ff" font-size="5" text-anchor="middle" font-weight="bold" stroke="#0ff" stroke-width="0.3">1</text>
<text x="866" y="606.25" fill="#0ff" font-size="5" text-anchor="middle" font-weight="bold" stroke="#0ff" stroke-width="0.3" textLength="6.0" lengthAdjust="spacingAndGlyphs">45</text>
<text x="894" y="606.25" fill="#0ff" font-size="5" text-anchor="middle" font-weight="bold" stroke="#0ff" stroke-width="0.3" textLength="25" lengthAdjust="spacingAndGlyphs">GB1095-90</text>
<text x="792" y="613.1" fill="#0ff" font-size="5" text-anchor="middle" font-weight="bold" stroke="#0ff" stroke-width="0.3">16</text>
<text x="808.5" y="612.8" fill="#0ff" font-size="3.6" text-anchor="start" font-weight="bold" stroke="#0ff" stroke-width="1.3" stroke-linejoin="round" textLength="10.4" lengthAdjust="spacingAndGlyphs">轴套</text>
<text x="819.4" y="613.1999999999999" fill="#0ff" font-size="5" text-anchor="start" font-weight="bold" stroke="#0ff" stroke-width="0.3">Φ30</text>
<text x="844" y="613.1" fill="#0ff" font-size="5" text-anchor="middle" font-weight="bold" stroke="#0ff" stroke-width="0.3">1</text>
<text x="866" y="613.1" fill="#0ff" font-size="5" text-anchor="middle" font-weight="bold" stroke="#0ff" stroke-width="0.3" textLength="28" lengthAdjust="spacingAndGlyphs">ZCuSn5PbTi</text>
<text x="792" y="619.95" fill="#0ff" font-size="5" text-anchor="middle" font-weight="bold" stroke="#0ff" stroke-width="0.3">17</text>
<text x="798.9" y="619.65" fill="#0ff" font-size="3.6" text-anchor="start" font-weight="bold" stroke="#0ff" stroke-width="1.3" stroke-linejoin="round" textLength="20.8" lengthAdjust="spacingAndGlyphs">六角螺栓</text>
<text x="820.2" y="620.05" fill="#0ff" font-size="5" text-anchor="start" font-weight="bold" stroke="#0ff" stroke-width="0.3">M20×75</text>
<text x="844" y="619.95" fill="#0ff" font-size="5" text-anchor="middle" font-weight="bold" stroke="#0ff" stroke-width="0.3">4</text>
<text x="866" y="619.95" fill="#0ff" font-size="5" text-anchor="middle" font-weight="bold" stroke="#0ff" stroke-width="0.3" textLength="15.0" lengthAdjust="spacingAndGlyphs">Q235A</text>
<text x="894" y="619.95" fill="#0ff" font-size="5" text-anchor="middle" font-weight="bold" stroke="#0ff" stroke-width="0.3" textLength="25" lengthAdjust="spacingAndGlyphs">GB5782-86</text>
<text x="792" y="626.8" fill="#0ff" font-size="5" text-anchor="middle" font-weight="bold" stroke="#0ff" stroke-width="0.3">18</text>
<text x="807.0" y="626.5" fill="#0ff" font-size="3.6" text-anchor="start" font-weight="bold" stroke="#0ff" stroke-width="1.3" stroke-linejoin="round" textLength="10.4" lengthAdjust="spacingAndGlyphs">螺母</text>
<text x="817.9" y="626.9" fill="#0ff" font-size="5" text-anchor="start" font-weight="bold" stroke="#0ff" stroke-width="0.3"> M20</text>
<text x="844" y="626.8" fill="#0ff" font-size="5" text-anchor="middle" font-weight="bold" stroke="#0ff" stroke-width="0.3">4</text>
<text x="866" y="626.8" fill="#0ff" font-size="5" text-anchor="middle" font-weight="bold" stroke="#0ff" stroke-width="0.3" textLength="15.0" lengthAdjust="spacingAndGlyphs">Q235A</text>
<text x="894" y="626.8" fill="#0ff" font-size="5" text-anchor="middle" font-weight="bold" stroke="#0ff" stroke-width="0.3" textLength="25" lengthAdjust="spacingAndGlyphs">GB6170-86</text>
<text x="792" y="633.65" fill="#0ff" font-size="5" text-anchor="middle" font-weight="bold" stroke="#0ff" stroke-width="0.3">19</text>
<text x="803.2" y="633.35" fill="#0ff" font-size="3.6" text-anchor="start" font-weight="bold" stroke="#0ff" stroke-width="1.3" stroke-linejoin="round" textLength="20.8" lengthAdjust="spacingAndGlyphs">六角螺栓</text>
<text x="824.5" y="633.75" fill="#0ff" font-size="5" text-anchor="start" font-weight="bold" stroke="#0ff" stroke-width="0.3">M24</text>
<text x="844" y="633.65" fill="#0ff" font-size="5" text-anchor="middle" font-weight="bold" stroke="#0ff" stroke-width="0.3">6</text>
<text x="866" y="633.65" fill="#0ff" font-size="5" text-anchor="middle" font-weight="bold" stroke="#0ff" stroke-width="0.3" textLength="15.0" lengthAdjust="spacingAndGlyphs">Q235A</text>
<text x="894" y="633.65" fill="#0ff" font-size="5" text-anchor="middle" font-weight="bold" stroke="#0ff" stroke-width="0.3" textLength="25" lengthAdjust="spacingAndGlyphs">GB5782-86</text>
<text x="792" y="640.5" fill="#0ff" font-size="5" text-anchor="middle" font-weight="bold" stroke="#0ff" stroke-width="0.3">20</text>
<text x="809.9" y="640.2" fill="#0ff" font-size="3.6" text-anchor="start" font-weight="bold" stroke="#0ff" stroke-width="1.3" stroke-linejoin="round" textLength="10.4" lengthAdjust="spacingAndGlyphs">垫圈</text>
<text x="820.8" y="640.6" fill="#0ff" font-size="5" text-anchor="start" font-weight="bold" stroke="#0ff" stroke-width="0.3">24</text>
<text x="844" y="640.5" fill="#0ff" font-size="5" text-anchor="middle" font-weight="bold" stroke="#0ff" stroke-width="0.3">6</text>
<text x="866" y="640.5" fill="#0ff" font-size="5" text-anchor="middle" font-weight="bold" stroke="#0ff" stroke-width="0.3" textLength="12.0" lengthAdjust="spacingAndGlyphs">65Mn</text>
<text x="894" y="640.5" fill="#0ff" font-size="5" text-anchor="middle" font-weight="bold" stroke="#0ff" stroke-width="0.3" textLength="20.3" lengthAdjust="spacingAndGlyphs">GB93-87</text>
<text x="792" y="647.35" fill="#0ff" font-size="5" text-anchor="middle" font-weight="bold" stroke="#0ff" stroke-width="0.3">21</text>
<text x="810.2" y="647.05" fill="#0ff" font-size="3.6" text-anchor="start" font-weight="bold" stroke="#0ff" stroke-width="1.3" stroke-linejoin="round" textLength="15.6" lengthAdjust="spacingAndGlyphs">连杆体</text>
<text x="844" y="647.35" fill="#0ff" font-size="5" text-anchor="middle" font-weight="bold" stroke="#0ff" stroke-width="0.3">1</text>
<text x="866" y="647.35" fill="#0ff" font-size="5" text-anchor="middle" font-weight="bold" stroke="#0ff" stroke-width="0.3" textLength="6.0" lengthAdjust="spacingAndGlyphs">45</text>
<text x="792" y="654.2" fill="#0ff" font-size="5" text-anchor="middle" font-weight="bold" stroke="#0ff" stroke-width="0.3">22</text>
<text x="809.9" y="653.9" fill="#0ff" font-size="3.6" text-anchor="start" font-weight="bold" stroke="#0ff" stroke-width="1.3" stroke-linejoin="round" textLength="10.4" lengthAdjust="spacingAndGlyphs">螺母</text>
<text x="820.8" y="654.3" fill="#0ff" font-size="5" text-anchor="start" font-weight="bold" stroke="#0ff" stroke-width="0.3">M8</text>
<text x="844" y="654.2" fill="#0ff" font-size="5" text-anchor="middle" font-weight="bold" stroke="#0ff" stroke-width="0.3">8</text>
<text x="866" y="654.2" fill="#0ff" font-size="5" text-anchor="middle" font-weight="bold" stroke="#0ff" stroke-width="0.3" textLength="15.0" lengthAdjust="spacingAndGlyphs">Q235A</text>
<text x="894" y="654.2" fill="#0ff" font-size="5" text-anchor="middle" font-weight="bold" stroke="#0ff" stroke-width="0.3" textLength="25" lengthAdjust="spacingAndGlyphs">GB6170-86</text>
<text x="792" y="661.05" fill="#0ff" font-size="5" text-anchor="middle" font-weight="bold" stroke="#0ff" stroke-width="0.3">23</text>
<text x="812.8" y="660.75" fill="#0ff" font-size="3.6" text-anchor="start" font-weight="bold" stroke="#0ff" stroke-width="1.3" stroke-linejoin="round" textLength="10.4" lengthAdjust="spacingAndGlyphs">油封</text>
<text x="844" y="661.05" fill="#0ff" font-size="5" text-anchor="middle" font-weight="bold" stroke="#0ff" stroke-width="0.3">1</text>
<text x="894" y="661.05" fill="#0ff" font-size="5" text-anchor="middle" font-weight="bold" stroke="#0ff" stroke-width="0.3" textLength="25" lengthAdjust="spacingAndGlyphs">GB5783-94</text>
<text x="792" y="667.9" fill="#0ff" font-size="5" text-anchor="middle" font-weight="bold" stroke="#0ff" stroke-width="0.3">24</text>
<text x="805.0" y="667.6" fill="#0ff" font-size="3.6" text-anchor="start" font-weight="bold" stroke="#0ff" stroke-width="1.3" stroke-linejoin="round" textLength="26.0" lengthAdjust="spacingAndGlyphs">密封垫片组</text>
<text x="844" y="667.9" fill="#0ff" font-size="5" text-anchor="middle" font-weight="bold" stroke="#0ff" stroke-width="0.3">2</text>
<text x="894" y="667.9" fill="#0ff" font-size="5" text-anchor="middle" font-weight="bold" stroke="#0ff" stroke-width="0.3" textLength="25" lengthAdjust="spacingAndGlyphs">GB5783-94</text>
<text x="792" y="674.75" fill="#0ff" font-size="5" text-anchor="middle" font-weight="bold" stroke="#0ff" stroke-width="0.3">25</text>
<text x="805.5" y="674.45" fill="#0ff" font-size="3.6" text-anchor="start" font-weight="bold" stroke="#0ff" stroke-width="1.3" stroke-linejoin="round" textLength="10.4" lengthAdjust="spacingAndGlyphs">螺栓</text>
<text x="816.4" y="674.85" fill="#0ff" font-size="5" text-anchor="start" font-weight="bold" stroke="#0ff" stroke-width="0.3">M8×30</text>
<text x="844" y="674.75" fill="#0ff" font-size="5" text-anchor="middle" font-weight="bold" stroke="#0ff" stroke-width="0.3">20</text>
<text x="866" y="674.75" fill="#0ff" font-size="5" text-anchor="middle" font-weight="bold" stroke="#0ff" stroke-width="0.3" textLength="15.0" lengthAdjust="spacingAndGlyphs">Q235A</text>
<text x="894" y="674.75" fill="#0ff" font-size="5" text-anchor="middle" font-weight="bold" stroke="#0ff" stroke-width="0.3" textLength="25" lengthAdjust="spacingAndGlyphs">GB5783-86</text>
<text x="792" y="681.6" fill="#0ff" font-size="5" text-anchor="middle" font-weight="bold" stroke="#0ff" stroke-width="0.3">26</text>
<text x="812.8" y="681.3" fill="#0ff" font-size="3.6" text-anchor="start" font-weight="bold" stroke="#0ff" stroke-width="1.3" stroke-linejoin="round" textLength="10.4" lengthAdjust="spacingAndGlyphs">端盖</text>
<text x="844" y="681.6" fill="#0ff" font-size="5" text-anchor="middle" font-weight="bold" stroke="#0ff" stroke-width="0.3">1</text>
<text x="866" y="681.6" fill="#0ff" font-size="5" text-anchor="middle" font-weight="bold" stroke="#0ff" stroke-width="0.3" textLength="15.0" lengthAdjust="spacingAndGlyphs">HT200</text>
<text x="894" y="681.6" fill="#0ff" font-size="5" text-anchor="middle" font-weight="bold" stroke="#0ff" stroke-width="0.3" textLength="17.4" lengthAdjust="spacingAndGlyphs">JB/T83</text>
<text x="792" y="688.45" fill="#0ff" font-size="5" text-anchor="middle" font-weight="bold" stroke="#0ff" stroke-width="0.3">27</text>
<text x="815.4" y="688.15" fill="#0ff" font-size="3.6" text-anchor="start" font-weight="bold" stroke="#0ff" stroke-width="1.3" stroke-linejoin="round" textLength="5.2" lengthAdjust="spacingAndGlyphs">销</text>
<text x="844" y="688.45" fill="#0ff" font-size="5" text-anchor="middle" font-weight="bold" stroke="#0ff" stroke-width="0.3">2</text>
<text x="866" y="688.45" fill="#0ff" font-size="5" text-anchor="middle" font-weight="bold" stroke="#0ff" stroke-width="0.3" textLength="6.0" lengthAdjust="spacingAndGlyphs">45</text>
<text x="792" y="695.3" fill="#0ff" font-size="5" text-anchor="middle" font-weight="bold" stroke="#0ff" stroke-width="0.3">28</text>
<text x="804.1" y="695.0" fill="#0ff" font-size="3.6" text-anchor="start" font-weight="bold" stroke="#0ff" stroke-width="1.3" stroke-linejoin="round" textLength="10.4" lengthAdjust="spacingAndGlyphs">螺塞</text>
<text x="815.0" y="695.4" fill="#0ff" font-size="5" text-anchor="start" font-weight="bold" stroke="#0ff" stroke-width="0.3">M30×15</text>
<text x="844" y="695.3" fill="#0ff" font-size="5" text-anchor="middle" font-weight="bold" stroke="#0ff" stroke-width="0.3">1</text>
<text x="866" y="695.3" fill="#0ff" font-size="5" text-anchor="middle" font-weight="bold" stroke="#0ff" stroke-width="0.3" textLength="15.0" lengthAdjust="spacingAndGlyphs">Q235A</text>
<text x="894" y="695.3" fill="#0ff" font-size="5" text-anchor="middle" font-weight="bold" stroke="#0ff" stroke-width="0.3" textLength="23.2" lengthAdjust="spacingAndGlyphs">HY569-79</text>
<text x="913" y="585.7" fill="#0ff" font-size="5" text-anchor="middle" font-weight="bold" stroke="#0ff" stroke-width="0.3">12</text>
<text x="933.8" y="585.4" fill="#0ff" font-size="3.6" text-anchor="start" font-weight="bold" stroke="#0ff" stroke-width="1.3" stroke-linejoin="round" textLength="10.4" lengthAdjust="spacingAndGlyphs">压盖</text>
<text x="965" y="585.7" fill="#0ff" font-size="5" text-anchor="middle" font-weight="bold" stroke="#0ff" stroke-width="0.3">1</text>
<text x="986.5" y="585.7" fill="#0ff" font-size="5" text-anchor="middle" font-weight="bold" stroke="#0ff" stroke-width="0.3" textLength="6.0" lengthAdjust="spacingAndGlyphs">45</text>
<text x="1014" y="585.7" fill="#0ff" font-size="5" text-anchor="middle" font-weight="bold" stroke="#0ff" stroke-width="0.3" textLength="17.4" lengthAdjust="spacingAndGlyphs">JB/T83</text>
<text x="913" y="592.55" fill="#0ff" font-size="5" text-anchor="middle" font-weight="bold" stroke="#0ff" stroke-width="0.3">11</text>
<text x="922.8" y="592.25" fill="#0ff" font-size="3.6" text-anchor="start" font-weight="bold" stroke="#0ff" stroke-width="1.3" stroke-linejoin="round" textLength="20.8" lengthAdjust="spacingAndGlyphs">锁紧螺母</text>
<text x="944.1" y="592.65" fill="#0ff" font-size="5" text-anchor="start" font-weight="bold" stroke="#0ff" stroke-width="0.3"> M48</text>
<text x="965" y="592.55" fill="#0ff" font-size="5" text-anchor="middle" font-weight="bold" stroke="#0ff" stroke-width="0.3">1</text>
<text x="986.5" y="592.55" fill="#0ff" font-size="5" text-anchor="middle" font-weight="bold" stroke="#0ff" stroke-width="0.3" textLength="15.0" lengthAdjust="spacingAndGlyphs">Q235A</text>
<text x="913" y="599.4" fill="#0ff" font-size="5" text-anchor="middle" font-weight="bold" stroke="#0ff" stroke-width="0.3">10</text>
<text x="933.8" y="599.1" fill="#0ff" font-size="3.6" text-anchor="start" font-weight="bold" stroke="#0ff" stroke-width="1.3" stroke-linejoin="round" textLength="10.4" lengthAdjust="spacingAndGlyphs">曲轴</text>
<text x="965" y="599.4" fill="#0ff" font-size="5" text-anchor="middle" font-weight="bold" stroke="#0ff" stroke-width="0.3">1</text>
<text x="986.5" y="599.4" fill="#0ff" font-size="5" text-anchor="middle" font-weight="bold" stroke="#0ff" stroke-width="0.3" textLength="6.0" lengthAdjust="spacingAndGlyphs">45</text>
<text x="1014" y="599.4" fill="#0ff" font-size="5" text-anchor="middle" font-weight="bold" stroke="#0ff" stroke-width="0.3" textLength="17.4" lengthAdjust="spacingAndGlyphs">JB/T83</text>
<text x="913" y="606.25" fill="#0ff" font-size="5" text-anchor="middle" font-weight="bold" stroke="#0ff" stroke-width="0.3">9</text>
<text x="933.8" y="605.95" fill="#0ff" font-size="3.6" text-anchor="start" font-weight="bold" stroke="#0ff" stroke-width="1.3" stroke-linejoin="round" textLength="10.4" lengthAdjust="spacingAndGlyphs">箱体</text>
<text x="965" y="606.25" fill="#0ff" font-size="5" text-anchor="middle" font-weight="bold" stroke="#0ff" stroke-width="0.3">1</text>
<text x="986.5" y="606.25" fill="#0ff" font-size="5" text-anchor="middle" font-weight="bold" stroke="#0ff" stroke-width="0.3" textLength="15.0" lengthAdjust="spacingAndGlyphs">HT200</text>
<text x="913" y="613.1" fill="#0ff" font-size="5" text-anchor="middle" font-weight="bold" stroke="#0ff" stroke-width="0.3">8</text>
<text x="931.2" y="612.8" fill="#0ff" font-size="3.6" text-anchor="start" font-weight="bold" stroke="#0ff" stroke-width="1.3" stroke-linejoin="round" textLength="15.6" lengthAdjust="spacingAndGlyphs">V型圈</text>
<text x="965" y="613.1" fill="#0ff" font-size="5" text-anchor="middle" font-weight="bold" stroke="#0ff" stroke-width="0.3">4</text>
<text x="1014" y="613.1" fill="#0ff" font-size="5" text-anchor="middle" font-weight="bold" stroke="#0ff" stroke-width="0.3" textLength="25" lengthAdjust="spacingAndGlyphs">GB1154-89</text>
<text x="913" y="619.95" fill="#0ff" font-size="5" text-anchor="middle" font-weight="bold" stroke="#0ff" stroke-width="0.3">7</text>
<text x="925.1" y="619.65" fill="#0ff" font-size="3.6" text-anchor="start" font-weight="bold" stroke="#0ff" stroke-width="1.3" stroke-linejoin="round" textLength="10.4" lengthAdjust="spacingAndGlyphs">螺栓</text>
<text x="936.0" y="620.05" fill="#0ff" font-size="5" text-anchor="start" font-weight="bold" stroke="#0ff" stroke-width="0.3">M16×46</text>
<text x="965" y="619.95" fill="#0ff" font-size="5" text-anchor="middle" font-weight="bold" stroke="#0ff" stroke-width="0.3">4</text>
<text x="986.5" y="619.95" fill="#0ff" font-size="5" text-anchor="middle" font-weight="bold" stroke="#0ff" stroke-width="0.3" textLength="15.0" lengthAdjust="spacingAndGlyphs">Q235A</text>
<text x="1014" y="619.95" fill="#0ff" font-size="5" text-anchor="middle" font-weight="bold" stroke="#0ff" stroke-width="0.3" textLength="25" lengthAdjust="spacingAndGlyphs">GB5782-86</text>
<text x="913" y="626.8" fill="#0ff" font-size="5" text-anchor="middle" font-weight="bold" stroke="#0ff" stroke-width="0.3">6</text>
<text x="931.2" y="626.5" fill="#0ff" font-size="3.6" text-anchor="start" font-weight="bold" stroke="#0ff" stroke-width="1.3" stroke-linejoin="round" textLength="15.6" lengthAdjust="spacingAndGlyphs">轴承盖</text>
<text x="965" y="626.8" fill="#0ff" font-size="5" text-anchor="middle" font-weight="bold" stroke="#0ff" stroke-width="0.3">2</text>
<text x="986.5" y="626.8" fill="#0ff" font-size="5" text-anchor="middle" font-weight="bold" stroke="#0ff" stroke-width="0.3" textLength="15.0" lengthAdjust="spacingAndGlyphs">Q235A</text>
<text x="913" y="633.65" fill="#0ff" font-size="5" text-anchor="middle" font-weight="bold" stroke="#0ff" stroke-width="0.3">5</text>
<text x="933.8" y="633.35" fill="#0ff" font-size="3.6" text-anchor="start" font-weight="bold" stroke="#0ff" stroke-width="1.3" stroke-linejoin="round" textLength="10.4" lengthAdjust="spacingAndGlyphs">活塞</text>
<text x="965" y="633.65" fill="#0ff" font-size="5" text-anchor="middle" font-weight="bold" stroke="#0ff" stroke-width="0.3">2</text>
<text x="986.5" y="633.65" fill="#0ff" font-size="5" text-anchor="middle" font-weight="bold" stroke="#0ff" stroke-width="0.3" textLength="24.0" lengthAdjust="spacingAndGlyphs">1Cr18Ni9</text>
<text x="913" y="640.5" fill="#0ff" font-size="5" text-anchor="middle" font-weight="bold" stroke="#0ff" stroke-width="0.3">4</text>
<text x="931.2" y="640.2" fill="#0ff" font-size="3.6" text-anchor="start" font-weight="bold" stroke="#0ff" stroke-width="1.3" stroke-linejoin="round" textLength="15.6" lengthAdjust="spacingAndGlyphs">十字头</text>
<text x="965" y="640.5" fill="#0ff" font-size="5" text-anchor="middle" font-weight="bold" stroke="#0ff" stroke-width="0.3">1</text>
<text x="986.5" y="640.5" fill="#0ff" font-size="5" text-anchor="middle" font-weight="bold" stroke="#0ff" stroke-width="0.3" textLength="15.0" lengthAdjust="spacingAndGlyphs">Q235A</text>
<text x="913" y="647.35" fill="#0ff" font-size="5" text-anchor="middle" font-weight="bold" stroke="#0ff" stroke-width="0.3">3</text>
<text x="933.8" y="647.05" fill="#0ff" font-size="3.6" text-anchor="start" font-weight="bold" stroke="#0ff" stroke-width="1.3" stroke-linejoin="round" textLength="10.4" lengthAdjust="spacingAndGlyphs">缸套</text>
<text x="965" y="647.35" fill="#0ff" font-size="5" text-anchor="middle" font-weight="bold" stroke="#0ff" stroke-width="0.3">1</text>
<text x="986.5" y="647.35" fill="#0ff" font-size="5" text-anchor="middle" font-weight="bold" stroke="#0ff" stroke-width="0.3" textLength="24.0" lengthAdjust="spacingAndGlyphs">3Cr13Ni9</text>
<text x="913" y="654.2" fill="#0ff" font-size="5" text-anchor="middle" font-weight="bold" stroke="#0ff" stroke-width="0.3">2</text>
<text x="933.8" y="653.9" fill="#0ff" font-size="3.6" text-anchor="start" font-weight="bold" stroke="#0ff" stroke-width="1.3" stroke-linejoin="round" textLength="10.4" lengthAdjust="spacingAndGlyphs">缸体</text>
<text x="965" y="654.2" fill="#0ff" font-size="5" text-anchor="middle" font-weight="bold" stroke="#0ff" stroke-width="0.3">1</text>
<text x="986.5" y="654.2" fill="#0ff" font-size="5" text-anchor="middle" font-weight="bold" stroke="#0ff" stroke-width="0.3" textLength="24.0" lengthAdjust="spacingAndGlyphs">3Cr13Ni9</text>
<text x="913" y="661.05" fill="#0ff" font-size="5" text-anchor="middle" font-weight="bold" stroke="#0ff" stroke-width="0.3">1</text>
<text x="936.4" y="660.75" fill="#0ff" font-size="3.6" text-anchor="start" font-weight="bold" stroke="#0ff" stroke-width="1.3" stroke-linejoin="round" textLength="5.2" lengthAdjust="spacingAndGlyphs">阀</text>
<text x="965" y="661.05" fill="#0ff" font-size="5" text-anchor="middle" font-weight="bold" stroke="#0ff" stroke-width="0.3">1</text>
<text x="986.5" y="661.05" fill="#0ff" font-size="5" text-anchor="middle" font-weight="bold" stroke="#0ff" stroke-width="0.3" textLength="28" lengthAdjust="spacingAndGlyphs">ZCuSn5PbTi</text>
<text x="913" y="668.3" fill="#0ff" font-size="3.4" text-anchor="middle" font-weight="bold" stroke="#0ff" stroke-width="1.4" stroke-linejoin="round" textLength="9" lengthAdjust="spacingAndGlyphs">序号</text>
<text x="939" y="668.3" fill="#0ff" font-size="3.4" text-anchor="middle" font-weight="bold" stroke="#0ff" stroke-width="1.4" stroke-linejoin="round" textLength="11" lengthAdjust="spacingAndGlyphs">名称</text>
<text x="965" y="668.3" fill="#0ff" font-size="3.4" text-anchor="middle" font-weight="bold" stroke="#0ff" stroke-width="1.4" stroke-linejoin="round" textLength="9" lengthAdjust="spacingAndGlyphs">数量</text>
<text x="986.5" y="668.3" fill="#0ff" font-size="3.4" text-anchor="middle" font-weight="bold" stroke="#0ff" stroke-width="1.4" stroke-linejoin="round" textLength="15" lengthAdjust="spacingAndGlyphs">材料牌号</text>
<text x="1014" y="668.3" fill="#0ff" font-size="3.4" text-anchor="middle" font-weight="bold" stroke="#0ff" stroke-width="1.4" stroke-linejoin="round" textLength="13" lengthAdjust="spacingAndGlyphs">备注栏</text>
<line x1="785.5" y1="587.25" x2="785.5" y2="697" stroke="#fff"/>
<line x1="798.5" y1="587.25" x2="798.5" y2="697" stroke="#fff"/>
<line x1="837.5" y1="587.25" x2="837.5" y2="697" stroke="#fff"/>
<line x1="850.5" y1="587.25" x2="850.5" y2="697" stroke="#fff"/>
<line x1="881" y1="587.25" x2="881" y2="697" stroke="#fff"/>
<line x1="907" y1="587.25" x2="907" y2="697" stroke="#fff"/>
<line x1="907" y1="580.4" x2="907" y2="670" stroke="#fff"/>
<line x1="919.5" y1="580.4" x2="919.5" y2="670" stroke="#fff"/>
<line x1="959" y1="580.4" x2="959" y2="670" stroke="#fff"/>
<line x1="971.5" y1="580.4" x2="971.5" y2="670" stroke="#fff"/>
<line x1="1001.5" y1="580.4" x2="1001.5" y2="670" stroke="#fff"/>
<line x1="907" y1="580.4" x2="1027" y2="580.4" stroke="#7fff00"/>
<line x1="785.5" y1="587.25" x2="1027" y2="587.25" stroke="#7fff00"/>
<line x1="785.5" y1="594.1" x2="1027" y2="594.1" stroke="#7fff00"/>
<line x1="785.5" y1="600.95" x2="1027" y2="600.95" stroke="#7fff00"/>
<line x1="785.5" y1="607.8" x2="1027" y2="607.8" stroke="#7fff00"/>
<line x1="785.5" y1="614.65" x2="1027" y2="614.65" stroke="#7fff00"/>
<line x1="785.5" y1="621.5" x2="1027" y2="621.5" stroke="#7fff00"/>
<line x1="785.5" y1="628.35" x2="1027" y2="628.35" stroke="#7fff00"/>
<line x1="785.5" y1="635.2" x2="1027" y2="635.2" stroke="#7fff00"/>
<line x1="785.5" y1="642.05" x2="1027" y2="642.05" stroke="#7fff00"/>
<line x1="785.5" y1="648.9" x2="1027" y2="648.9" stroke="#7fff00"/>
<line x1="785.5" y1="655.75" x2="1027" y2="655.75" stroke="#7fff00"/>
<line x1="785.5" y1="662.6" x2="1027" y2="662.6" stroke="#7fff00"/>
<line x1="785.5" y1="669.45" x2="1027" y2="669.45" stroke="#7fff00"/>
<line x1="785.5" y1="676.3" x2="1027" y2="676.3" stroke="#7fff00"/>
<line x1="785.5" y1="683.15" x2="1027" y2="683.15" stroke="#7fff00"/>
<line x1="785.5" y1="690.0" x2="907" y2="690.0" stroke="#7fff00"/>
<line x1="785.5" y1="696.85" x2="907" y2="696.85" stroke="#7fff00"/>
<text x="908" y="680.6" fill="#e8e8e8" font-size="8.3" text-anchor="start" font-weight="normal" textLength="49" lengthAdjust="spacingAndGlyphs">低温泵俯视图</text>
<line x1="959" y1="670" x2="959" y2="683.2" stroke="#7fff00"/>
<line x1="980.5" y1="670" x2="980.5" y2="683.2" stroke="#7fff00"/>
<line x1="1001" y1="670" x2="1001" y2="683.2" stroke="#7fff00"/>
<line x1="1015" y1="670" x2="1015" y2="683.2" stroke="#7fff00"/>
<line x1="959" y1="676.3" x2="1027" y2="676.3" stroke="#7fff00"/>
<line x1="907" y1="683.2" x2="1027" y2="683.2" stroke="#7fff00"/>
<line x1="959" y1="683.2" x2="959" y2="697" stroke="#7fff00"/>
<line x1="919.5" y1="683.2" x2="919.5" y2="697" stroke="#7fff00"/>
<line x1="941.5" y1="683.2" x2="941.5" y2="697" stroke="#7fff00"/>
<line x1="907" y1="690.2" x2="959" y2="690.2" stroke="#7fff00"/>
<rect x="960.5" y="671.5" width="15" height="3.7" fill="#fff"/>
<rect x="982.5" y="671.5" width="15" height="3.7" fill="#fff"/>
<rect x="1002.5" y="671.5" width="9" height="3.7" fill="#fff"/>
<rect x="1015.0" y="671.0" width="11" height="4.5" fill="#fff"/>
<rect x="961.0" y="678.5" width="14" height="3.7" fill="#fff"/>
<rect x="988.5" y="678.5" width="3" height="3.7" fill="#fff"/>
<rect x="1002.5" y="678.5" width="9" height="3.7" fill="#fff"/>
<rect x="1015.0" y="678.1" width="10.5" height="4.4" fill="#fff"/>
<rect x="907.5" y="685.3" width="9" height="3.7" fill="#fff"/>
<rect x="922.0" y="685.3" width="13" height="3.7" fill="#fff"/>
<rect x="941.5" y="685.3" width="15" height="3.7" fill="#fff"/>
<rect x="907.5" y="692.5" width="9" height="3" fill="#fff"/>
<text x="971.5" y="693.8" fill="#e8e8e8" font-size="6.2" text-anchor="start" font-weight="normal" stroke="none" textLength="43.5" lengthAdjust="spacingAndGlyphs">陕西理工 学院校</text>
<text x="619" y="626.5" fill="#0ff" font-size="9" text-anchor="middle" font-weight="normal" textLength="35" lengthAdjust="spacingAndGlyphs">技术要求</text>
<text x="561" y="644.5" fill="#0ff" font-size="5.8" text-anchor="start" textLength="120" lengthAdjust="spacingAndGlyphs" stroke="#0ff" stroke-width="0.35">1. 泵内应清洁，不允许有任何机械杂质，凡与</text>
<text x="561" y="652.5" fill="#0ff" font-size="5.8" text-anchor="start" textLength="122" lengthAdjust="spacingAndGlyphs" stroke="#0ff" stroke-width="0.35">工作介质接触的表面及所有零部位应去油脂和</text>
<text x="561" y="660.6" fill="#0ff" font-size="5.8" text-anchor="start" textLength="27" lengthAdjust="spacingAndGlyphs" stroke="#0ff" stroke-width="0.35">进行干燥。</text>
<text x="561" y="668.6" fill="#0ff" font-size="5.8" text-anchor="start" textLength="122" lengthAdjust="spacingAndGlyphs" stroke="#0ff" stroke-width="0.35">2. 活塞装入缸体时，活塞环接口相互错开一</text>
<text x="561" y="676.7" fill="#0ff" font-size="5.8" text-anchor="start" textLength="20" lengthAdjust="spacingAndGlyphs" stroke="#0ff" stroke-width="0.35">定位置。</text>
<text x="561" y="684.8" fill="#0ff" font-size="5.8" text-anchor="start" textLength="64" lengthAdjust="spacingAndGlyphs" stroke="#0ff" stroke-width="0.35">3. 泵在装箱前严格油封。</text>
</g>
</svg>
<div id="tb">
<svg width="1052" height="15" viewBox="0 0 1052 15" style="position:absolute;left:0;top:0">
<rect x="0" y="0" width="1052" height="15" fill="#fff"/>
<rect x="924" y="0" width="128" height="13" fill="#f0f0f0"/>
<!-- layer combo icons -->
<circle cx="11.5" cy="-1" r="6.3" fill="#f5dc3a" stroke="#2a6fd0" stroke-width="1.2"/>
<rect x="5" y="4" width="3" height="2.5" fill="#f0d020"/><rect x="15" y="4" width="3" height="2.5" fill="#f0d020"/>
<ellipse cx="26.5" cy="-0.5" rx="5" ry="3.2" fill="#8fb4e0"/>
<rect x="26.5" y="-2" width="8" height="7" fill="#fff" stroke="#7f95b0" stroke-width="1"/>
<path d="M44.5,-2 L44.5,4 Q48,6.5 52,4 L52,-2 Z" fill="#d8cc20" stroke="#a09a10" stroke-width="0.8"/>
<rect x="55.5" y="-3" width="8.5" height="7" fill="#fff" stroke="#000" stroke-width="1"/>
<text x="70" y="3.6" font-family="Liberation Mono, monospace" font-size="10" fill="#000">0</text>
<path d="M273,0 L278.5,0 L275.75,2.8 Z" fill="#000"/>
<!-- layer tool buttons -->
<rect x="283" y="0" width="50" height="11" fill="#f0f0f0"/>
<rect x="333" y="0" width="1" height="11" fill="#bbb"/>
<path d="M287.6,0 L287.6,2.1 L296.8,5.6 L302.8,3 L302.8,0 Z" fill="#f0d828" stroke="#c0a818" stroke-width="0.6"/>
<path d="M290,0 L296.8,2.8 L301.3,0.8 L301.3,0 Z" fill="#9cbce4"/>
<path d="M287.5,7.5 L290.5,4.2 M288.3,4 L290.8,4 L290.8,6.5" stroke="#1a2f80" stroke-width="1.2" fill="none"/>
<path d="M310.6,0 L310.6,2.1 L319,6.4 L325.9,3.4 L325.9,0 Z" fill="#a9c4e6" stroke="#7f9fce" stroke-width="0.6"/>
<path d="M312,0 L319,3.4 L324.5,1 L324.5,0 Z" fill="#7ea6da"/>
<!-- grip -->
<rect x="335" y="0" width="11" height="11" fill="#f4f4f4"/>
<rect x="338.5" y="0" width="1.2" height="10.5" fill="#b4b4b4"/><rect x="342.5" y="0" width="1.2" height="10.5" fill="#b4b4b4"/>
<rect x="335" y="10" width="10" height="1" fill="#c0c0c0"/>
<rect x="347" y="0" width="1" height="9" fill="#dfe5f0"/>
<!-- color combo -->
<rect x="354.5" y="-3" width="8.5" height="7" fill="#fff" stroke="#000" stroke-width="1"/>
<text x="368" y="3.9" font-family="Liberation Mono, monospace" font-size="10" fill="#000" textLength="40">ByLayer</text>
<path d="M487,0 L492.5,0 L489.75,3 Z" fill="#000"/>
<rect x="497" y="0" width="8" height="9" fill="#e4e9f3"/><rect x="500" y="0" width="1" height="9" fill="#000"/>
<!-- linetype combo -->
<rect x="509" y="0" width="60" height="1" fill="#000"/>
<text x="574" y="2.9" font-family="Liberation Mono, monospace" font-size="10" fill="#000" textLength="40">ByLayer</text>
<path d="M652.5,0 L658.5,0 L655.5,3 Z" fill="#000"/>
<rect x="662.5" y="0" width="8.5" height="9" fill="#e4e9f3"/><rect x="666" y="0" width="1" height="9" fill="#000"/>
<!-- lineweight combo -->
<rect x="675" y="0" width="35" height="2.4" fill="#000"/>
<text x="714.5" y="3.6" font-family="Liberation Mono, monospace" font-size="10" fill="#000" textLength="23">0.30</text>
<text x="745.5" y="5.2" font-family="Noto Sans CJK SC, sans-serif" font-size="11.5" fill="#000" textLength="23">毫米</text>
<path d="M783,0 L789,0 L786,3 Z" fill="#000"/>
<rect x="797" y="0" width="1" height="9" fill="#000"/>
<!-- plot style combo (disabled) -->
<rect x="801.5" y="-2" width="118.5" height="11.5" fill="#f0f0f0" stroke="#c8c8c8" stroke-width="1"/>
<rect x="902" y="0" width="17.5" height="9" fill="#fff"/>
<text x="810.5" y="4.5" font-family="Noto Sans CJK SC, sans-serif" font-size="11.5" fill="#8a8a8a" textLength="36">随颜色</text>
<path d="M910,0 L915.5,0 L912.75,3 Z" fill="#a0a0a0"/>
<rect x="924" y="0" width="1" height="11" fill="#c4c4c4"/>
<!-- bottom edge rows -->
<rect x="0" y="10" width="924" height="1" fill="#e8ecf2"/>
<rect x="0" y="11" width="1052" height="1" fill="#a0a0a0"/>
<rect x="924" y="11" width="128" height="1" fill="#f0f0f0"/>
<rect x="0" y="12" width="1052" height="1" fill="#f0f0f0"/>
<rect x="0" y="13" width="1052" height="1" fill="#b0b0b0"/>
<rect x="0" y="14" width="1052" height="1" fill="#484848"/>
</svg>
</div>
<div id="bb">
<span style="position:absolute;left:0;top:0;width:48px;height:4px;background:#f4f4f4"></span>
<span style="position:absolute;left:8px;top:0;width:1px;height:4px;background:#d0d0d0"></span>
<span style="position:absolute;left:30px;top:0;width:1px;height:4px;background:#d0d0d0"></span>
<span style="position:absolute;left:51px;top:0;width:1px;height:4px;background:#000"></span>
<span style="position:absolute;left:54px;top:0;width:35px;height:4px;background:#fff"></span>
<span style="position:absolute;left:89px;top:0;width:1px;height:4px;background:#444"></span>
<span style="position:absolute;left:60px;top:-1.5px;font:bold 12px/12px 'Liberation Sans','Noto Sans CJK SC',sans-serif;color:#000;white-space:nowrap">模型</span>
<span style="position:absolute;left:92px;top:-1.5px;font:bold 12px/12px 'Liberation Sans','Noto Sans CJK SC',sans-serif;color:#000;white-space:nowrap;letter-spacing:0.5px">布局1&nbsp;&nbsp;布局2</span>
<span style="position:absolute;left:175px;top:0;width:877px;height:4px;background:#f0f0f0"></span>
</div>

</body></html>
